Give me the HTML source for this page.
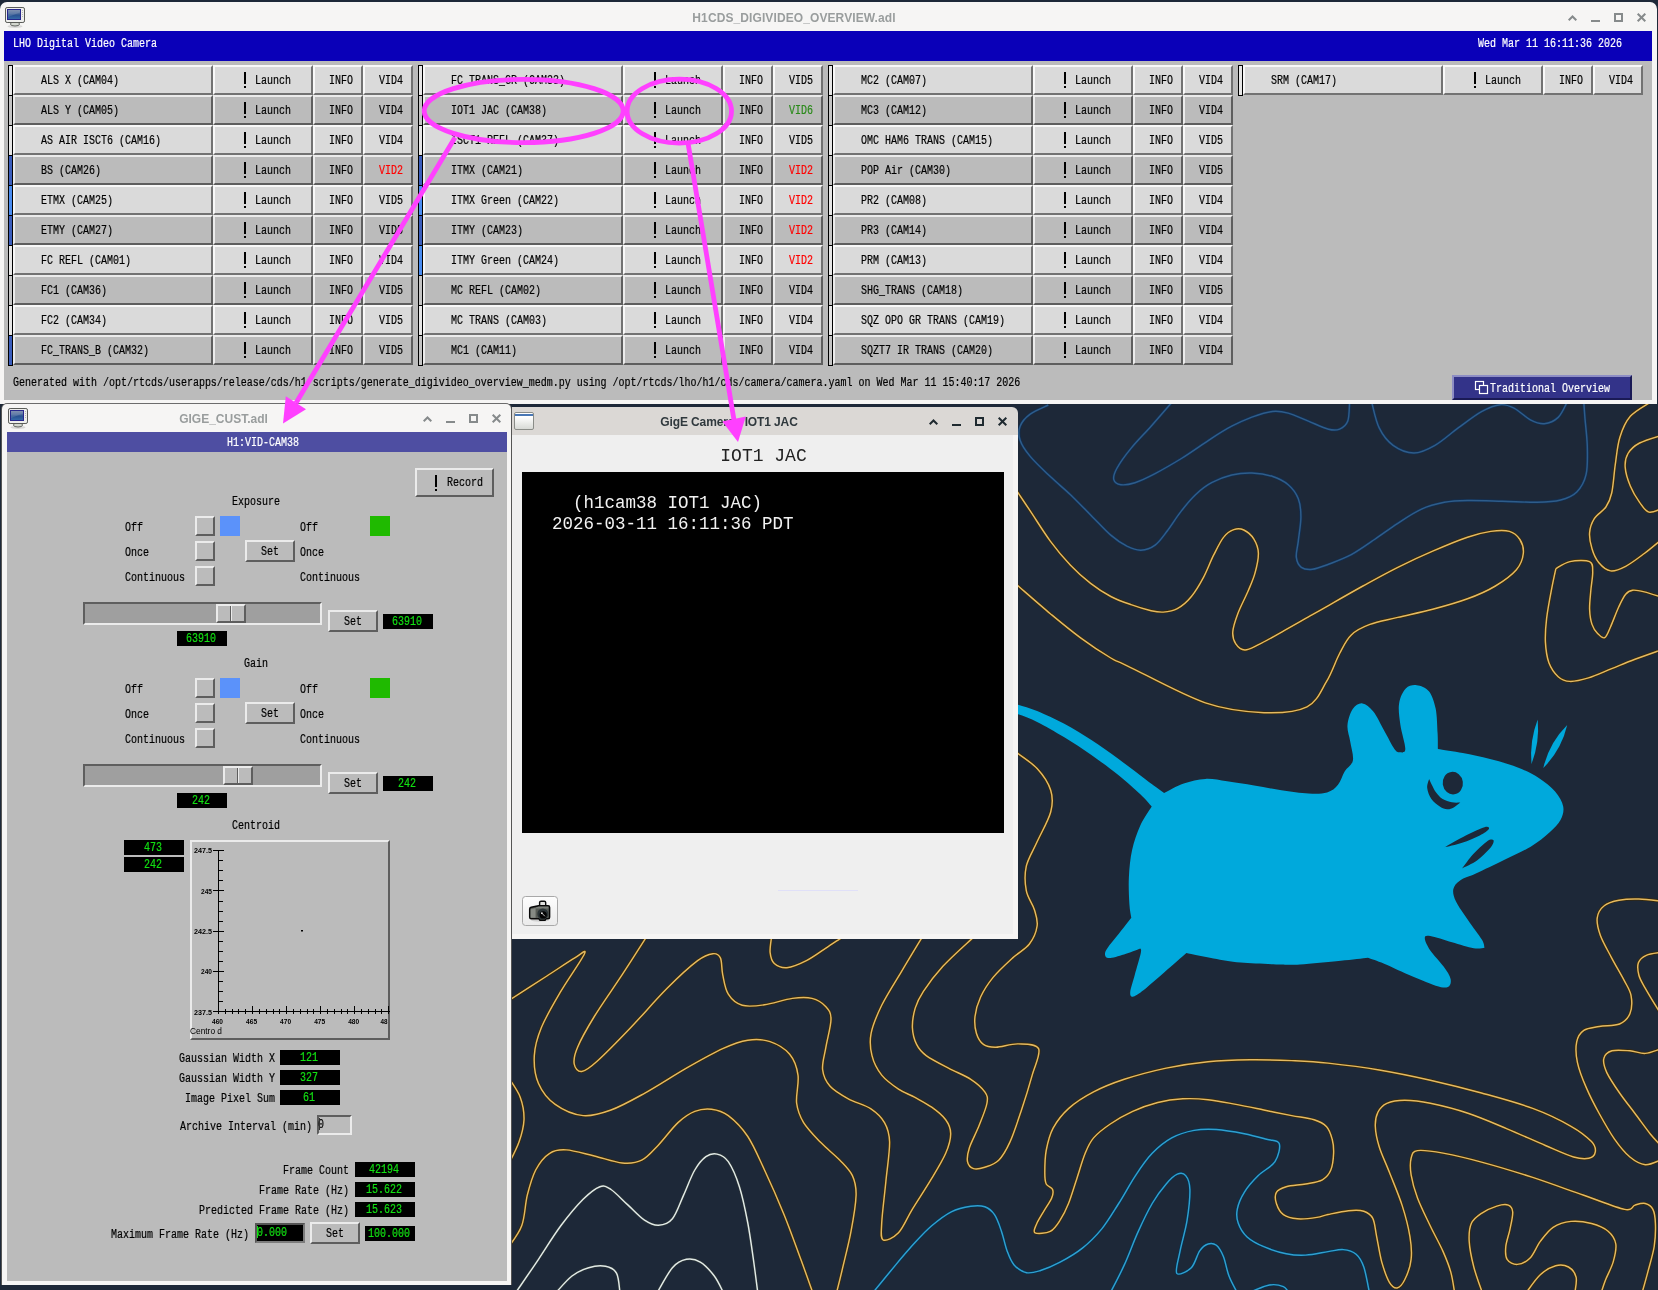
<!DOCTYPE html>
<html><head><meta charset="utf-8"><title>desktop</title><style>
html,body{margin:0;padding:0}
body{width:1658px;height:1290px;position:relative;overflow:hidden;background:#1d2838;font-family:"Liberation Sans",sans-serif}
.abs,.b,.m,.wt{position:absolute}
.m{font:13.7px/14px "Liberation Mono",monospace;white-space:pre;transform:scaleX(0.73);transform-origin:0 0;color:#000;-webkit-text-stroke:.22px currentColor}
.b{box-sizing:border-box;border:2px solid}
.bl{background:#dadada;border-color:#f8f8f8 #727272 #727272 #f8f8f8}
.bd{background:#bbb;border-color:#ebebeb #5e5e5e #5e5e5e #ebebeb}
.wt{text-align:center;font:bold 12px "Liberation Sans",sans-serif;white-space:nowrap}
#lay{position:absolute;left:0;top:0;width:1658px;height:1290px;will-change:transform}
#w1{position:absolute;left:0;top:2px;width:1657px;height:402px;background:#f6f5f4;border-radius:7px 7px 0 0}
#w2{position:absolute;left:2px;top:404px;width:509px;height:881px;background:#f6f5f4;border-radius:5px 5px 0 0;box-shadow:0 -1px 0 #6c6c6c,1px 0 0 #555,-1px 0 0 #555}
#w3{position:absolute;left:512px;top:407px;width:506px;height:532px;background:#dbd8d5;border-radius:0 6px 0 0}
.vt{font:17.5px/19.1px "Liberation Mono",monospace;white-space:pre;color:#f2f2f2;transform:scaleY(1.1);transform-origin:0 0}
</style></head>
<body>
<svg style="position:absolute;left:0;top:0" width="1658" height="1290" viewBox="0 0 1658 1290">
<defs><path id="ln0" d="M1048.3 405C1045.3 406.6 1034.9 410.6 1030.2 414.1C1025.5 417.6 1021.8 421.8 1020.1 426.2C1018.4 430.6 1018.4 435.3 1020.1 440.3C1021.8 445.4 1025.1 450.4 1030.2 456.4C1035.2 462.5 1043.6 470.2 1050.3 476.6C1057 483 1063.8 488.4 1070.5 494.7C1077.2 501.1 1083.9 508.2 1090.6 514.9C1097.4 521.6 1104.7 529.9 1110.8 535.1C1116.8 540.3 1121.9 543.6 1126.9 546.2C1132 548.7 1136.3 550.4 1141 550.2C1145.7 550 1150.8 548.3 1155.1 545.1C1159.5 542 1162.9 536.7 1167.2 531C1171.6 525.3 1176.6 516.9 1181.4 510.9C1186.1 504.8 1190.4 499.5 1195.5 494.7C1200.5 490 1205.5 485.9 1211.6 482.7C1217.6 479.4 1225 476.6 1231.7 475C1238.5 473.4 1245.2 472.8 1251.9 473C1258.6 473.2 1266 474.3 1272.1 476.2C1278.1 478.1 1283.8 480.9 1288.2 484.7C1292.6 488.4 1296.2 493.4 1298.3 498.8C1300.4 504.2 1300.9 509.9 1300.9 516.9C1300.9 524 1299 534.4 1298.3 541.1C1297.5 547.8 1295.8 552.9 1296.3 557.2C1296.8 561.6 1298.6 565.3 1301.3 567.3C1304 569.3 1307.8 569.8 1312.4 569.3C1316.9 568.8 1322 566.7 1328.5 564.3C1335 561.8 1343.6 558.8 1351.3 554.7C1358.9 550.5 1366.8 544.8 1374.5 539.5C1382.3 534.3 1390 528.3 1397.8 523.3C1405.5 518.2 1413.3 512.8 1421 509.3C1428.8 505.8 1436.5 503.8 1444.3 502.3C1452 500.9 1457.8 500.7 1467.5 500.5C1477.2 500.3 1490.8 500.9 1502.4 501.2C1514 501.5 1527.6 502.5 1537.3 502.3C1547 502.1 1554 501.7 1560.6 500C1567.1 498.3 1572.6 496.1 1576.8 491.9C1581.1 487.6 1584.4 482 1586.1 474.4C1587.9 466.9 1587.5 455.8 1587.3 446.5C1587.1 437.2 1585.6 426 1585 418.6C1584.4 411.2 1584 405 1583.8 402.3M1171.3 403C1167.9 406.9 1157.8 418.6 1151.1 426.2C1144.4 433.8 1136.7 441.3 1131 448.4C1125.2 455.4 1119.7 463.3 1116.8 468.5C1114 473.7 1113.1 476.9 1113.8 479.6C1114.5 482.3 1117.3 484.2 1120.9 484.7C1124.4 485.2 1129.3 484.5 1135 482.7C1140.7 480.8 1147.4 477.6 1155.1 473.6C1162.9 469.5 1171.9 464.3 1181.4 458.5C1190.8 452.6 1203.2 443.7 1211.6 438.3C1220 432.9 1225 429.7 1231.7 426.2C1238.5 422.7 1245.2 419.6 1251.9 417.1C1258.6 414.7 1266 412.2 1272.1 411.5C1278.1 410.8 1282.1 411.5 1288.2 413.1C1294.2 414.7 1301.6 418.5 1308.4 421.2C1315.1 423.9 1323.3 427.9 1328.5 429.2C1333.7 430.5 1336.4 430.5 1339.6 429.1C1342.8 427.7 1346.1 425.4 1347.8 420.9C1349.4 416.5 1349.3 405.4 1349.6 402.3M1371.7 402.3C1373 406.6 1375.6 420.7 1379.2 427.9C1382.7 435.1 1387.3 441.2 1393.1 445.3C1398.9 449.5 1407.1 453 1414 453C1421 453 1427.6 449.5 1435 445.3C1442.3 441.2 1450.5 433.5 1458.2 427.9C1466 422.3 1474.5 415.5 1481.5 411.6C1488.5 407.8 1494.7 405.2 1500.1 404.7C1505.5 404.1 1509 405.6 1514 408.1C1519.1 410.7 1525.3 417.2 1530.3 419.8C1535.4 422.4 1539.6 424.1 1544.3 423.7C1548.9 423.3 1554.4 421 1558.2 417.4C1562 413.9 1565.6 404.8 1567.1 402.3"/></defs>
<use href="#ln0" fill="none" stroke="#122f52" stroke-width="2.9"/>
<use href="#ln0" fill="none" stroke="#2e5d8b" stroke-width="1.45"/>
<defs><path id="ln1" d="M1014 486.7C1016.7 490.7 1024.1 501.8 1030.2 510.9C1036.2 519.9 1043.6 532 1050.3 541.1C1057 550.2 1063.8 558.2 1070.5 565.3C1077.2 572.4 1083.9 578.2 1090.6 583.4C1097.4 588.7 1104.1 593 1110.8 596.5C1117.5 600.1 1124.2 602.3 1131 604.6C1137.7 607 1145.7 609.4 1151.1 610.7C1156.5 611.9 1158.8 612.4 1163.2 612.1C1167.6 611.7 1172.6 611.2 1177.3 608.6C1182 606.1 1187.1 601.8 1191.4 596.5C1195.8 591.3 1199.8 584.3 1203.5 577.4C1207.2 570.5 1210.2 561.9 1213.6 555.2C1217 548.5 1220.3 541.3 1223.7 537.1C1227 532.8 1230.4 530.8 1233.8 529.6C1237.1 528.4 1240.5 528.4 1243.8 530C1247.2 531.6 1251.5 535.2 1253.9 539.1C1256.3 543 1258.2 547.5 1258.4 553.2C1258.5 558.9 1256.7 567 1254.9 573.4C1253.2 579.7 1250.7 584.8 1247.9 591.5C1245 598.2 1240.3 607 1237.8 613.7C1235.3 620.4 1233.1 626.8 1232.8 631.8C1232.4 636.9 1233.8 640.9 1235.8 643.9C1237.8 646.9 1241.2 649.8 1244.9 650C1248.5 650.1 1251.7 648 1258 644.9C1264.2 641.9 1273.1 636.9 1282.1 631.8C1291.2 626.8 1304.7 619 1312.4 614.7C1320 610.4 1319.6 610.6 1328 605.8C1336.4 601 1351.3 592.4 1362.9 586C1374.5 579.7 1386.1 573.3 1397.8 567.4C1409.4 561.6 1421 556.2 1432.7 551.2C1444.3 546.1 1457.8 540.5 1467.5 537.2C1477.2 533.9 1483.8 532.4 1490.8 531.4C1497.8 530.4 1504.6 530 1509.4 531.4C1514.2 532.8 1517.5 535.9 1519.9 539.5C1522.2 543.2 1523.9 548.4 1523.3 553.5C1522.8 558.5 1521 564.3 1516.4 569.8C1511.7 575.2 1503.6 581.2 1495.4 586C1487.3 590.9 1478 595 1467.5 598.8C1457.1 602.7 1444.3 606.2 1432.7 609.3C1421 612.4 1408.2 614.9 1397.8 617.4C1387.3 620 1377.6 621.5 1369.9 624.4C1362.1 627.3 1356.3 630 1351.3 634.9C1346.2 639.7 1343.7 645.7 1339.6 653.5C1335.5 661.2 1332 672.5 1326.6 681.4C1321.1 690.3 1317.5 701.6 1307 706.8C1296.6 712 1281 713.3 1264 712.7C1247.1 712 1228.2 710.7 1205.4 702.9C1182.6 695.1 1143 673.2 1127.2 665.8C1111.5 658.3 1118.6 662.7 1110.8 658C1103 653.4 1090.6 645.3 1080.6 637.9C1070.5 630.5 1061.4 622.9 1050.3 613.7C1039.2 604.4 1020.1 587.6 1014 582.4M1650.1 402.3C1646.8 404.7 1635.4 410.5 1630.3 416.3C1625.3 422.1 1622.4 429.1 1619.9 437.2C1617.3 445.3 1616.6 455.8 1615.2 465.1C1613.9 474.4 1613.3 486 1611.7 493C1610.2 500 1608.8 502.7 1605.9 507C1603 511.2 1597 514.3 1594.3 518.6C1591.6 522.9 1590 527.5 1589.6 532.6C1589.2 537.6 1590.4 543.8 1592 548.8C1593.5 553.9 1595.8 559.1 1598.9 562.8C1602 566.5 1606.1 570.3 1610.6 570.9C1615 571.5 1620.1 569.2 1625.7 566.3C1631.3 563.4 1638.1 558.1 1644.3 553.5C1650.5 548.8 1659.8 540.9 1662.9 538.4M1662.9 434.9C1659 436.2 1645.4 439.9 1639.6 443C1633.8 446.1 1630.4 449.4 1628 453.5C1625.6 457.6 1624.8 462 1625.2 467.4C1625.6 472.9 1627.9 480.2 1630.3 486C1632.7 491.9 1636.5 498 1639.6 502.3C1642.7 506.7 1645.1 511.1 1648.9 512.1C1652.8 513.1 1660.6 508.8 1662.9 508.1M1662.9 597.7C1659.8 596.7 1649.3 593.1 1644.3 591.9C1639.2 590.6 1635.8 589.8 1632.7 590.2C1629.6 590.6 1628 591.4 1625.7 594.2C1623.3 597 1621.2 601.6 1618.7 607C1616.2 612.4 1612.9 621.6 1610.6 626.7C1608.2 631.9 1606.9 636.5 1604.7 637.7C1602.6 638.8 1599.9 635.9 1597.8 633.7C1595.6 631.5 1593.3 628.5 1592 624.4C1590.6 620.3 1589.8 614.9 1589.6 609.3C1589.4 603.7 1590.3 596.9 1590.8 590.7C1591.3 584.5 1592.8 576.9 1592.7 572.1C1592.5 567.2 1593.4 563.4 1589.6 561.6C1585.8 559.9 1575.5 560.5 1569.9 561.6C1564.2 562.8 1558.2 567.4 1555.9 568.6M1555.9 568.6C1555.1 572.3 1552.8 582.4 1551.3 590.7C1549.7 599 1547.6 610.1 1546.6 618.6C1545.6 627.1 1545.1 634.5 1545.4 641.9C1545.8 649.2 1546.8 657 1548.9 662.8C1551.1 668.6 1554.7 673.6 1558.2 676.7C1561.7 679.8 1564.8 681.2 1569.9 681.4C1574.9 681.6 1581.5 680 1588.5 677.9C1595.4 675.8 1604 671.7 1611.7 668.6C1619.5 665.5 1626.4 662.5 1635 659.3C1643.5 656.1 1658.2 651 1662.9 649.3M1661.2 901.2C1657.5 900.8 1645.9 899.1 1638.9 899C1631.9 898.8 1624.8 899.1 1619 900.2C1613.2 901.3 1607.8 902.7 1604.2 905.7C1600.5 908.6 1597.8 913.1 1597.2 918.1C1596.6 923 1598 928.8 1600.4 935.5C1602.8 942.1 1607.7 950.3 1611.6 957.8C1615.5 965.2 1620.7 973.8 1624 980.1C1627.3 986.5 1630.2 990.2 1631.1 995.8C1632.1 1001.4 1631.8 1009 1629.9 1013.7C1627.9 1018.4 1624.7 1021.8 1619.6 1024C1614.5 1026.1 1605.1 1025.4 1599.2 1026.5C1593.2 1027.6 1587.6 1027.8 1583.8 1030.3C1580.1 1032.9 1577.7 1036.5 1576.7 1041.9C1575.6 1047.2 1575.8 1054.7 1577.4 1062.3C1579 1070 1582.7 1079.4 1586.4 1087.9C1590 1096.4 1594.5 1105 1599.2 1113.5C1603.9 1122 1609.4 1131.8 1614.5 1139.1C1619.6 1146.3 1624.7 1152.7 1629.9 1157C1635 1161.2 1640.1 1164.1 1645.2 1164.7C1650.3 1165.2 1658 1160.8 1660.6 1160M1661.2 952.3C1658.7 952.8 1650.1 953.6 1646.3 955.3C1642.5 957 1639.6 959.4 1638.4 962.7C1637.2 966.1 1637.8 970.9 1638.9 975.2C1640 979.4 1641.6 981.7 1645.2 988.1C1648.8 994.6 1658 1009.5 1660.6 1013.7M1660.6 1049C1658 1049.7 1650.3 1053.1 1645.2 1053.4C1640.1 1053.7 1635.4 1051.2 1629.9 1050.8C1624.3 1050.4 1616.3 1049.5 1612 1050.8C1607.6 1052.1 1604.6 1054.9 1603.8 1058.5C1602.9 1062.1 1604.2 1066.8 1606.8 1072.6C1609.5 1078.3 1614.9 1086.2 1619.6 1093C1624.3 1099.8 1629.9 1106.7 1635 1113.5C1640.1 1120.3 1646.1 1128.6 1650.3 1134C1654.6 1139.3 1658.9 1143.5 1660.6 1145.5M1328 1214.5C1333.3 1213.4 1342.5 1211.3 1348.5 1210.7C1354.4 1210.1 1359.8 1209.9 1363.8 1211.2C1367.9 1212.5 1370.6 1214.2 1372.8 1218.4C1374.9 1222.6 1375.1 1229 1376.6 1236.3C1378.1 1243.5 1379.6 1254.2 1381.7 1261.9C1383.9 1269.5 1386.8 1278 1389.4 1282.3C1392 1286.7 1394.5 1288.4 1397.1 1288C1399.6 1287.5 1402.4 1284.5 1404.7 1279.8C1407.1 1275 1410.3 1266.6 1411.1 1259.3C1412 1252.1 1411.4 1245.2 1409.9 1236.3C1408.4 1227.3 1405.6 1216.2 1402.2 1205.6C1398.8 1194.9 1393.2 1182.1 1389.4 1172.3C1385.6 1162.5 1381.5 1154.4 1379.2 1146.7C1376.8 1139.1 1375.5 1132 1375.3 1126.3C1375.1 1120.5 1376 1116 1377.9 1112.2C1379.8 1108.4 1382.4 1105.3 1386.8 1103.3C1391.3 1101.3 1397.5 1100.2 1404.7 1100.2C1412 1100.2 1419.7 1101 1430.3 1103.3C1441 1105.5 1455.9 1109.2 1468.7 1113.5C1481.5 1117.8 1494.3 1123.5 1507.1 1128.8C1519.9 1134.2 1534.4 1140.8 1545.4 1145.5C1556.5 1150.2 1566.3 1154.8 1573.6 1157C1580.8 1159.1 1585.3 1159.1 1588.9 1158.3C1592.6 1157.4 1594.9 1154.6 1595.3 1151.9C1595.8 1149.1 1595.5 1145.9 1591.5 1141.6C1587.4 1137.4 1580.8 1131.8 1571 1126.3C1561.2 1120.7 1547.6 1113.9 1532.7 1108.4C1517.7 1102.8 1498.5 1097.7 1481.5 1093C1464.4 1088.3 1447.4 1084.1 1430.3 1080.2C1413.3 1076.4 1396.2 1072.9 1379.2 1070C1362.1 1067.1 1342.6 1064.7 1328 1063.1C1313.4 1061.5 1304.8 1061.2 1291.7 1060.6C1278.7 1060.1 1263.8 1059.6 1249.9 1059.8C1235.9 1060 1222 1060.3 1208 1061.7C1194.1 1063.1 1180.1 1065.2 1166.2 1068.1C1152.2 1071.1 1136.4 1075.3 1124.3 1079.3C1112.2 1083.3 1102.9 1087 1093.6 1091.9C1084.3 1096.7 1075.2 1102.6 1068.5 1108.6C1061.7 1114.7 1056.9 1121.2 1053.1 1128.1C1049.4 1135.1 1047.6 1143 1046.2 1150.5C1044.8 1157.9 1044.8 1167.2 1044.8 1172.8C1044.8 1178.4 1044.9 1181.2 1046.2 1184C1047.5 1186.7 1051.7 1187.2 1052.6 1189.5C1053.5 1191.9 1053.3 1194.2 1051.7 1197.9C1050.2 1201.6 1045.9 1207.4 1043.4 1211.9C1040.8 1216.3 1037.8 1220.9 1036.4 1224.4C1035 1227.9 1032.7 1231.6 1035 1232.8C1037.3 1234 1046.2 1233.5 1050.3 1231.4C1054.5 1229.3 1057.1 1224.9 1060.1 1220.2C1063.1 1215.6 1065.7 1210.5 1068.5 1203.5C1071.3 1196.5 1074.1 1186.7 1076.9 1178.4C1079.7 1170 1082.4 1160 1085.2 1153.3C1088 1146.5 1089.4 1142.8 1093.6 1137.9C1097.8 1133 1103.8 1128.4 1110.3 1124C1116.9 1119.5 1124.8 1115 1132.7 1111.4C1140.6 1107.8 1149.4 1104.6 1157.8 1102.5C1166.2 1100.4 1174.5 1099.3 1182.9 1098.8C1191.3 1098.4 1199.2 1098.7 1208 1099.7C1216.9 1100.6 1226.6 1102.7 1235.9 1104.4C1245.2 1106.1 1254.5 1108.1 1263.8 1110C1273.1 1111.9 1283.4 1114 1291.7 1115.6C1300.1 1117.2 1308.3 1117.9 1314.1 1119.8C1319.9 1121.6 1323.6 1123.5 1326.6 1126.7C1329.7 1130 1331 1134.9 1332.2 1139.3C1333.4 1143.7 1333.8 1148.1 1333.6 1153.3C1333.4 1158.4 1332.7 1165.6 1330.8 1170C1329 1174.4 1326.6 1177.4 1322.4 1179.8C1318.3 1182.1 1311.7 1182.8 1305.7 1184C1299.7 1185.1 1291 1185.3 1286.2 1186.7C1281.3 1188.1 1278 1189.5 1276.4 1192.3C1274.8 1195.1 1275.2 1199.8 1276.4 1203.5C1277.6 1207.2 1279.9 1212.1 1283.4 1214.7C1286.9 1217.2 1291.7 1218.4 1297.3 1218.8C1302.9 1219.3 1311.7 1218.2 1316.9 1217.4C1322 1216.7 1322.7 1215.7 1328 1214.5ZM1454.6 1292.6C1454 1289.1 1452.7 1278.9 1450.8 1272.1C1448.9 1265.3 1446.5 1259.3 1443.1 1251.6C1439.7 1244 1434.6 1235 1430.3 1226C1426.1 1217.1 1420.7 1206.4 1417.5 1197.9C1414.3 1189.4 1412.2 1181.5 1411.1 1174.9C1410.1 1168.3 1410.1 1162.3 1411.1 1158.3C1412.2 1154.2 1412.2 1151.4 1417.5 1150.6C1422.9 1149.7 1432.5 1151.2 1443.1 1153.1C1453.8 1155.1 1466.6 1158 1481.5 1162.1C1496.4 1166.1 1515.6 1171.9 1532.7 1177.4C1549.7 1183 1568.5 1190 1583.8 1195.3C1599.2 1200.7 1616.2 1207.8 1624.7 1209.4C1633.3 1211 1631.6 1206.1 1635 1205.1C1638.4 1204.1 1642.2 1202.8 1645.2 1203.5C1648.2 1204.3 1651.2 1206.1 1652.9 1209.4C1654.6 1212.7 1655.2 1217.3 1655.4 1223.5C1655.7 1229.7 1655.4 1238.4 1654.2 1246.5C1652.9 1254.6 1649.8 1264.4 1647.8 1272.1C1645.8 1279.8 1643.1 1289.1 1642.1 1292.6M1526.3 1292.6C1528.6 1289.6 1535.4 1279.1 1540.3 1274.7C1545.2 1270.2 1551 1267 1555.7 1265.7C1560.4 1264.4 1565.1 1265.1 1568.5 1267C1571.9 1268.9 1575.1 1272.9 1576.1 1277.2C1577.2 1281.5 1575.1 1290 1574.9 1292.6M1482.3 1292.6C1480.8 1288.3 1476 1275.5 1473.8 1267C1471.6 1258.4 1469.6 1248.6 1469.2 1241.4C1468.8 1234.1 1469.2 1228.2 1471.3 1223.5C1473.3 1218.8 1477.2 1216.2 1481.5 1213.3C1485.8 1210.4 1492.4 1207.5 1496.8 1206.1C1501.3 1204.7 1505.7 1204.1 1508.3 1205.1C1511 1206.1 1512.4 1208.1 1512.7 1212C1513 1215.9 1511.3 1222.8 1510.1 1228.6C1509 1234.4 1506.3 1241.4 1505.8 1246.5C1505.3 1251.6 1505.2 1256.3 1507.1 1259.3C1509 1262.3 1513.5 1264.6 1517.3 1264.4C1521.1 1264.2 1526.3 1261.9 1530.1 1258C1533.9 1254.2 1536.5 1246.5 1540.3 1241.4C1544.2 1236.3 1548 1230.7 1553.1 1227.3C1558.2 1224 1564.6 1222.1 1571 1221.4C1577.4 1220.8 1585.3 1221.9 1591.5 1223.5C1597.7 1225.1 1604.1 1227.8 1608.1 1231.2C1612.2 1234.6 1614.9 1238.8 1615.8 1244C1616.6 1249.1 1614.9 1255.9 1613.2 1261.9C1611.5 1267.8 1607.6 1274.7 1605.6 1279.8C1603.6 1284.9 1601.9 1290.4 1601.2 1292.6M507.8 1001.2C514.3 997 535.7 983.3 546.9 976C558 968.8 568.5 961.6 574.8 957.9C581 954.2 586.9 948.1 584.5 953.7C582.2 959.3 568 979.1 560.8 991.4C553.6 1003.7 545.7 1017 541.3 1027.7C536.9 1038.4 534.8 1046.3 534.3 1055.6C533.8 1064.9 535 1075.3 538.5 1083.5C542 1091.6 547.8 1099.1 555.2 1104.4C562.7 1109.8 573.8 1114.7 583.1 1115.6C592.4 1116.5 600.8 1113.7 611 1110C621.3 1106.3 632 1100.2 644.5 1093.3C657.1 1086.3 673.4 1075.6 686.4 1068.1C699.4 1060.7 712.4 1053.3 722.7 1048.6C732.9 1044 739.9 1041.4 747.8 1040.2C755.7 1039.1 763.1 1039.3 770.1 1041.6C777.1 1044 785 1048.6 789.7 1054.2C794.3 1059.8 796.9 1067 798 1075.1C799.2 1083.3 795.7 1095.1 796.6 1103C797.6 1110.9 799.7 1116 803.6 1122.6C807.6 1129.1 814.3 1135.8 820.3 1142.1C826.4 1148.4 834.5 1154.7 839.9 1160.2C845.2 1165.8 849.7 1169.8 852.4 1175.6C855.1 1181.4 856.3 1185.8 856.1 1195.1C855.8 1204.4 853.3 1219.3 851 1231.4C848.8 1243.5 845.1 1257.4 842.7 1267.7C840.3 1277.9 837.6 1288.6 836.5 1292.8M647.3 935.6C643.1 942.1 631 961.2 622.2 974.7C613.4 988.1 601.7 1004.4 594.3 1016.5C586.9 1028.6 580.9 1039.3 577.6 1047.2C574.2 1055.1 573.5 1059.9 574.2 1064C574.9 1068 577.9 1072 581.7 1071.5C585.6 1071 589 1068.5 597.1 1061.2C605.2 1053.9 619 1039.8 630.6 1027.7C642.2 1015.6 655.7 999.8 666.9 988.6C678 977.4 689.9 966.5 697.6 960.7C705.2 954.9 709.1 954.2 712.9 953.7C716.7 953.3 718.8 954.4 720.4 957.9C722.1 961.4 721.4 968.6 722.7 974.7C724 980.7 725 989.1 728.3 994.2C731.5 999.3 736.2 1003.6 742.2 1005.3C748.3 1007.1 756.2 1006 764.5 1004.8C772.9 1003.6 784.5 999.4 792.4 998.4C800.3 997.3 806.4 997 812 998.4C817.6 999.8 822.8 1003.3 825.9 1006.7C829.1 1010.2 831 1012.6 831 1019.3C831 1026 827.3 1038.8 825.9 1047.2C824.5 1055.6 821.9 1063 822.6 1069.5C823.3 1076 825.8 1081.4 830.1 1086.3C834.4 1091.2 841.5 1095.1 848.3 1098.8C855 1102.6 864.5 1104.7 870.6 1108.6C876.6 1112.6 881.4 1117 884.5 1122.6C887.7 1128.1 889.3 1132.3 889.6 1142.1C889.8 1151.9 887.2 1167.7 885.9 1181.2C884.6 1194.7 882.2 1213.3 881.7 1223C881.3 1232.8 880.3 1238.1 883.1 1239.8C885.9 1241.4 893.6 1237.9 898.5 1232.8C903.4 1227.7 906.9 1218.1 912.4 1209.1C918 1200 926.2 1187.7 931.7 1178.4C937.3 1169.1 942.5 1160.7 945.7 1153.3C948.9 1145.8 950.7 1139.3 950.7 1133.7C950.7 1128.1 948.9 1124.2 945.7 1119.8C942.5 1115.3 936.9 1110.9 931.7 1107.2C926.6 1103.5 920.5 1100.5 915 1097.4C909.5 1094.4 904 1092.8 898.5 1089.1C892.9 1085.3 886.2 1080.7 881.7 1075.1C877.3 1069.5 873.7 1062.6 872 1055.6C870.2 1048.6 869.5 1041.6 871.1 1033.3C872.8 1024.9 876.7 1015.6 881.7 1005.3C886.8 995.1 894.4 983.4 901.3 971.9C908.1 960.3 919.2 942.1 922.8 936.1M771.5 937C771.3 939.5 769.7 947.9 770.1 952.3C770.6 956.7 771.5 960.9 774.3 963.5C777.1 966 781.5 968.1 786.9 967.7C792.2 967.2 799.9 964 806.4 960.7C812.9 957.4 820.1 952 825.9 948.1C831.7 944.3 838.7 939.5 841.3 937.8M972.2 938.4C967.3 943 951 957.4 942.9 966.3C934.8 975.1 928 984.4 923.4 991.4C918.8 998.4 917.1 1002.1 915.2 1008.1C913.4 1014.2 912.2 1021.6 912.4 1027.7C912.7 1033.7 914.3 1039.8 916.6 1044.4C918.9 1049.1 920.9 1051.6 926.2 1055.6C931.5 1059.5 941 1064.2 948.5 1068.1C955.9 1072.1 964.8 1075.3 970.8 1079.3C976.9 1083.3 982.1 1087.9 984.8 1091.9C987.5 1095.8 987.9 1097.4 987 1103C986.1 1108.6 982.1 1117.9 979.2 1125.3C976.3 1132.8 971.4 1141.6 969.4 1147.7C967.5 1153.7 966.8 1158.1 967.5 1161.6C968.2 1165.1 970.7 1167.7 973.6 1168.6C976.5 1169.5 980.6 1168.6 984.8 1167.2C989 1165.8 994.5 1164.4 998.7 1160.2C1002.9 1156 1006.2 1150.2 1009.9 1142.1C1013.6 1134 1017.3 1122.6 1021 1111.4C1024.8 1100.2 1029.3 1085.6 1032.2 1075.1C1035.1 1064.7 1041 1053.8 1038.6 1048.6C1036.3 1043.4 1025.4 1044.1 1018.3 1043.9C1011.1 1043.6 1001.7 1047.1 995.9 1047.2C990.1 1047.3 986.6 1046.7 983.4 1044.4C980.1 1042.1 977.8 1037.9 976.4 1033.3C975 1028.6 974.3 1022.6 975 1016.5C975.7 1010.5 977.6 1003.5 980.6 997C983.6 990.5 987.8 984 993.1 977.4C998.5 970.9 1006.6 963.5 1012.7 957.9C1018.7 952.3 1025.3 949.3 1029.4 944C1033.5 938.6 1036.3 931.7 1037.1 926C1038 920.2 1036.2 915.6 1034.4 909.7C1032.6 903.8 1027.6 897.9 1026.3 890.7C1024.9 883.4 1024.5 874.4 1026.3 866.2C1028.1 858.1 1033.1 850.9 1037.1 841.8C1041.2 832.8 1048.4 820.6 1050.7 812C1053 803.4 1053 797.5 1050.7 790.3C1048.4 783 1043 775 1037.1 768.6C1031.3 762.1 1019 754.5 1015.4 751.7M507.8 1248.1C510.1 1244.4 518.5 1234.7 521.7 1225.8C525 1217 525 1204.4 527.3 1195.1C529.7 1185.8 532 1177 535.7 1170C539.4 1163 544.5 1156.6 549.7 1153.3C554.8 1149.9 559 1149.4 566.4 1149.9C573.8 1150.4 585 1153.9 594.3 1156C603.6 1158.2 614.3 1162.3 622.2 1163C630.1 1163.7 635.7 1163.3 641.7 1160.2C647.8 1157.2 652.4 1151.2 658.5 1144.9C664.5 1138.6 672 1128.1 678 1122.6C684.1 1117 689.2 1113.6 694.8 1111.4C700.3 1109.2 705.9 1108.5 711.5 1109.2C717.1 1109.9 722.2 1111 728.3 1115.6C734.3 1120.1 741.7 1127.4 747.8 1136.5C753.8 1145.6 758.5 1157 764.5 1170C770.6 1183 778 1199.8 784.1 1214.7C790.1 1229.5 796 1246.3 800.8 1259.3C805.6 1272.3 810.8 1287.2 812.8 1292.8M507.8 1076.5C509.9 1080 517.7 1090.2 520.3 1097.4C523 1104.7 524.2 1112.3 524 1119.8C523.7 1127.2 521.7 1134.4 519 1142.1C516.3 1149.8 509.7 1161.9 507.8 1165.8"/></defs>
<use href="#ln1" fill="none" stroke="#3a2906" stroke-width="2.9"/>
<use href="#ln1" fill="none" stroke="#e4ba62" stroke-width="1.45"/>
<defs><path id="ln2" d="M515.6 1292.8C519.4 1287.2 531 1270.5 538.5 1259.3C546 1248.1 553.4 1235.8 560.8 1225.8C568.3 1215.8 576.6 1205.8 583.1 1199.3C589.7 1192.8 595.2 1188.4 599.9 1186.7C604.5 1185.1 606.4 1186.5 611 1189.5C615.7 1192.6 622.2 1199.8 627.8 1204.9C633.4 1210 639.4 1216.8 644.5 1220.2C649.7 1223.6 653.8 1225.5 658.5 1225.3C663.1 1225 668.3 1223.9 672.4 1218.8C676.6 1213.8 679.9 1203.3 683.6 1195.1C687.3 1187 691 1176.4 694.8 1170C698.5 1163.6 702.2 1159.3 705.9 1156.6C709.7 1154 713.4 1153.3 717.1 1154.1C720.8 1154.9 724.5 1156.2 728.3 1161.6C732 1167.1 736.2 1176.5 739.4 1186.7C742.7 1197 745.5 1210.9 747.8 1223C750.1 1235.1 751.7 1247.7 753.4 1259.3C755 1270.9 757.1 1287.2 757.8 1292.8M555.8 1292.8C558.5 1290 566.5 1280.2 572 1276C577.5 1271.9 583.1 1269.3 588.7 1267.7C594.3 1266 600.8 1265.3 605.5 1266.3C610.1 1267.2 614.2 1268.8 616.6 1273.3C619 1277.7 619.4 1289.5 620 1292.8M657.1 1292.8C659.7 1288.6 667.6 1273.3 672.4 1267.7C677.3 1262.1 681.7 1260.2 686.4 1259.3C691 1258.4 695.7 1259.3 700.3 1262.1C705 1264.9 710.4 1270.9 714.3 1276C718.2 1281.2 722 1290 723.5 1292.8"/></defs>
<use href="#ln2" fill="none" stroke="#2a3338" stroke-width="2.9"/>
<use href="#ln2" fill="none" stroke="#e2ebe7" stroke-width="1.45"/>
<defs><path id="ln3" d="M872.8 1292.8C876.6 1288.1 888.7 1273.3 895.7 1264.9C902.7 1256.5 909 1249.1 915 1242.6C921 1236 925.7 1230.9 931.7 1225.8C937.8 1220.7 944.8 1215.1 951.3 1211.9C957.8 1208.6 965.2 1207.1 970.8 1206.3C976.4 1205.4 980.8 1205.4 984.8 1206.8C988.7 1208.2 991.7 1210.6 994.5 1214.7C997.3 1218.7 999.4 1225.3 1001.5 1231.4C1003.6 1237.4 1005 1245.3 1007.1 1250.9C1009.2 1256.5 1010.8 1261.3 1014.1 1264.9C1017.3 1268.5 1022.2 1271.8 1026.6 1272.7C1031 1273.6 1035 1272.2 1040.6 1270.5C1046.2 1268.7 1053.1 1265.8 1060.1 1262.1C1067.1 1258.4 1075.5 1253.7 1082.4 1248.1C1089.4 1242.6 1095.9 1236 1102 1228.6C1108 1221.2 1113.1 1212.3 1118.7 1203.5C1124.3 1194.7 1129.9 1184 1135.5 1175.6C1141 1167.2 1146.2 1159.5 1152.2 1153.3C1158.3 1147 1164.8 1141.7 1171.7 1137.9C1178.7 1134.1 1186.6 1131.8 1194.1 1130.4C1201.5 1129 1208 1129 1216.4 1129.5C1224.8 1130.1 1235.9 1132.1 1244.3 1133.7C1252.7 1135.3 1260.8 1137.7 1266.6 1139.3C1272.4 1140.9 1277.8 1139.8 1279.2 1143.5C1280.6 1147.2 1278.5 1156.3 1275 1161.6C1271.5 1167 1263.4 1170.5 1258.3 1175.6C1253.1 1180.7 1247.8 1186.7 1244.3 1192.3C1240.8 1197.9 1238.3 1204 1237.3 1209.1C1236.3 1214.2 1236.5 1218.4 1238.2 1223C1239.8 1227.7 1242.8 1233 1247.1 1237C1251.4 1240.9 1257.3 1244 1263.8 1246.7C1270.3 1249.5 1279.2 1252.3 1286.2 1253.7C1293.1 1255.1 1298.7 1255.5 1305.7 1255.1C1312.7 1254.8 1321.7 1252.6 1328 1251.6C1334.3 1250.7 1338.7 1249.2 1343.3 1249.6C1348 1250 1352.7 1251.3 1356.1 1254.2C1359.6 1257.1 1361.6 1260.6 1363.8 1267C1366 1273.4 1368.5 1288.3 1369.4 1292.6M1110.3 1292.8C1112.7 1288.1 1119.7 1275.1 1124.3 1264.9C1129 1254.7 1133.6 1241.6 1138.3 1231.4C1142.9 1221.2 1147.6 1211.4 1152.2 1203.5C1156.9 1195.6 1162 1188.8 1166.2 1184C1170.3 1179.1 1174.1 1175.6 1177.3 1174.2C1180.6 1172.8 1183.6 1173 1185.7 1175.6C1187.8 1178.1 1189.7 1182.1 1189.9 1189.5C1190.1 1197 1188.7 1210 1187.1 1220.2C1185.5 1230.5 1181.8 1242.1 1180.1 1250.9C1178.4 1259.8 1174.9 1270.5 1176.8 1273.3C1178.6 1276 1187.5 1271.4 1191.3 1267.7C1195.1 1264 1196.9 1254.9 1199.7 1250.9C1202.4 1247 1205.2 1244.9 1208 1244C1210.8 1243 1213.8 1243.3 1216.4 1245.3C1219 1247.4 1221.3 1251.4 1223.4 1256.5C1225.5 1261.6 1226.6 1270 1229 1276C1231.3 1282.1 1235.9 1290 1237.3 1292.8M1248.5 1292.8C1252 1291.5 1263.6 1286 1269.4 1285C1275.2 1284 1280.1 1285.3 1283.4 1286.7C1286.6 1288 1288 1291.8 1289 1292.8"/></defs>
<use href="#ln3" fill="none" stroke="#07314f" stroke-width="2.9"/>
<use href="#ln3" fill="none" stroke="#2fa0d0" stroke-width="1.45"/>
<path d="M1007.3 701.2C1009.1 701.8 1013.2 703.1 1018.1 704.8C1023.1 706.4 1029.4 707.9 1037.1 711C1044.8 714.2 1055.2 718.9 1064.3 723.8C1073.3 728.6 1082.4 734.2 1091.4 740.1C1100.5 745.9 1109.5 752.5 1118.6 759.1C1127.6 765.6 1138.1 773.8 1145.7 779.4C1153.3 785.1 1161.1 790.7 1164.1 793C1167.4 791.4 1176.8 785.8 1183.7 783.5C1190.6 781.1 1198.2 779.2 1205.4 778.9C1212.6 778.5 1219 780.2 1227.1 781.3C1235.2 782.4 1245.2 783.9 1254.2 785.4C1263.3 786.9 1272.3 788.9 1281.4 790.3C1290.4 791.6 1300.9 793.2 1308.5 793.5C1316.1 793.9 1322.2 793.9 1327.1 792.4C1332.1 791 1335.1 788.4 1338 784.8C1340.9 781.3 1342.3 775.3 1344.8 771.3C1347.3 767.2 1352 765.4 1352.9 760.4C1353.8 755.4 1351.1 747.3 1350.2 741.4C1349.3 735.5 1347 730.6 1347.5 725.1C1347.9 719.7 1350.4 712.5 1352.9 708.8C1355.4 705.2 1359 703 1362.4 703.4C1365.8 703.9 1369.7 707 1373.3 711.6C1376.9 716.1 1380.6 724.3 1384.1 730.6C1387.7 736.8 1391.8 745.4 1394.4 749C1397.1 752.6 1398.1 752.3 1399.9 752.3C1401.7 752.3 1405.2 753.5 1405.3 749C1405.4 744.5 1401.5 732.7 1400.4 725.1C1399.4 717.5 1398.1 709.5 1399.1 703.4C1400 697.3 1402.9 691.5 1405.8 688.5C1408.8 685.5 1412.8 684.8 1416.7 685.2C1420.5 685.7 1425.7 687.3 1428.9 691.2C1432.1 695.1 1434.2 701.8 1435.7 708.8C1437.1 715.9 1437.2 726.6 1437.6 733.3C1438 740 1437.8 746.4 1437.9 749C1442 749.7 1454.1 751.4 1462.8 753.1C1471.5 754.8 1480.9 756.7 1490 759.1C1499 761.4 1509 764 1517.1 767.2C1525.2 770.4 1532.5 774 1538.8 778.1C1545.1 782.1 1551 786.9 1555.1 791.6C1559.2 796.4 1562.3 801.8 1563.2 806.5C1564.1 811.3 1562.8 815.8 1560.5 820.1C1558.3 824.4 1554.6 827.9 1549.7 832.3C1544.7 836.8 1538.4 842.1 1530.7 846.7C1523 851.4 1512.6 855.8 1503.5 860.3C1494.5 864.7 1483.6 870 1476.4 873.3C1469.2 876.7 1464 877.7 1460.1 880.4C1456.3 883 1454 885.8 1453.3 889.3C1452.7 892.8 1453.6 896.3 1456 901.5C1458.5 906.7 1464 914.2 1468.3 920.5C1472.6 926.9 1479.1 935 1481.8 939.5C1484.5 944 1484.1 946.3 1484.5 947.7C1482.7 947.8 1479.1 949.1 1473.7 948.2C1468.3 947.3 1459.2 944.3 1452 942.2C1444.7 940.2 1434.8 936.7 1430.3 936C1425.7 935.3 1424.8 935.8 1424.8 938.2C1424.8 940.6 1427.1 945.6 1430.3 950.4C1433.4 955.1 1440.4 961.9 1443.8 966.7C1447.2 971.4 1449.9 975.5 1450.6 978.9C1451.3 982.3 1450.4 985.9 1447.9 987C1445.4 988.1 1442.2 987.7 1435.7 985.7C1429.1 983.6 1417.6 978.6 1408.6 974.8C1399.5 971 1388.2 965.4 1381.4 962.6C1374.6 959.7 1370.1 958.5 1367.8 957.7C1363.3 958.2 1352 959.6 1340.7 960.7C1329.4 961.8 1309.9 963.9 1300 964.5C1290.1 965.1 1291.3 964.8 1281.4 964.5C1271.5 964.2 1252 963.6 1240.7 962.6C1229.4 961.6 1222.6 960.1 1213.5 958.5C1204.5 956.9 1190.9 954 1186.4 953.1C1182.8 956.3 1171.5 966.2 1164.7 972.1C1157.9 978 1150.9 984.3 1145.7 988.4C1140.5 992.4 1136.1 995.8 1133.5 996.5C1130.9 997.2 1130 996.1 1130.2 992.4C1130.4 988.8 1133.1 981.4 1134.8 974.8C1136.6 968.2 1139.9 957.5 1140.8 953.1C1141.7 948.7 1140.4 949.2 1140.3 948.5C1137.5 949.5 1129.2 952.9 1124 954.4C1118.8 956 1112.2 958 1109.1 958C1105.9 958 1105.2 956.2 1105 954.4C1104.8 952.7 1105.4 951.1 1107.7 947.7C1110 944.3 1114.6 939.1 1118.6 934.1C1122.5 929.1 1129.2 920.5 1131.3 917.8C1131 915.6 1129.8 911 1129.4 904.2C1129 897.5 1128.4 886.2 1128.9 877.1C1129.3 868.1 1130.2 858.6 1132.1 850C1134 841.4 1137 832.8 1140.3 825.5C1143.5 818.3 1149.8 809.7 1151.7 806.5C1149.8 804.5 1145.8 799.5 1140.3 794.3C1134.7 789.1 1126.7 781.9 1118.6 775.3C1110.4 768.8 1100.5 761.3 1091.4 755C1082.4 748.7 1073.3 742.9 1064.3 737.3C1055.2 731.8 1044.8 725.7 1037.1 721.9C1029.4 718 1023.1 716 1018.1 714.3C1013.2 712.6 1009.1 712 1007.3 711.6C1007.3 709.8 1007.3 703 1007.3 701.2Z" fill="#00a9dc"/>
<ellipse cx="1452.8" cy="783.1" rx="10.1" ry="11.3" transform="rotate(-8 1452.8 783.1)" fill="#1d2838"/>
<path d="M1429.1 779.1C1428.8 780.6 1426.8 784.6 1427.2 787.9C1427.6 791.2 1429.3 796 1431.4 799.1C1433.5 802.2 1437.2 804.8 1439.8 806.5C1442.4 808.2 1444.9 809.1 1447.2 809.3C1449.5 809.5 1451.5 808.6 1453.7 807.5C1455.9 806.4 1459.2 803.4 1460.3 802.6C1458.9 802.5 1454.9 802.9 1451.9 802.3C1449 801.7 1445.2 800.7 1442.6 799.1C1440 797.5 1437.9 794.9 1436.1 792.6C1434.3 790.3 1433.1 787.4 1431.9 785.1C1430.7 782.9 1429.6 780.1 1429.1 779.1Z" fill="#1d2838"/>
<path d="M1444 847.5C1447.6 845.5 1459 838.8 1465.8 835.4C1472.5 832 1480.7 828.3 1484.5 827.2C1488.3 826.1 1489.7 827.5 1488.9 828.9C1488.1 830.3 1484.3 833.1 1479.8 835.4C1475.3 837.7 1468.1 840.8 1462.1 842.8C1456.1 844.8 1447 846.7 1444 847.5Z" fill="#1d2838"/>
<path d="M1462.1 868.4C1464 866 1469.3 858.4 1473.3 854C1477.3 849.6 1483.2 844.3 1486.3 841.9C1489.4 839.5 1490.7 839.6 1491.9 839.6C1493.1 839.6 1494.1 840.3 1493.6 841.9C1493.1 843.5 1491.9 846.2 1489.1 849.3C1486.3 852.4 1481.5 857.3 1477 860.5C1472.5 863.7 1464.6 867.1 1462.1 868.4Z" fill="#1d2838"/>
<path d="M1531.5 764Q1539.8 742.5 1537.7 719.5Q1529.4 741 1531.5 764Z" fill="#00a9dc"/>
<path d="M1543.3 768Q1561.4 749.9 1567.2 725Q1549.1 743.1 1543.3 768Z" fill="#00a9dc"/>
</svg>
<div id="lay">
<div id="w1">
<svg class="abs" style="left:5px;top:5px" width="24" height="22" viewBox="0 0 24 22"><defs><linearGradient id="mg40" x1="0" y1="0" x2="0" y2="1"><stop offset="0" stop-color="#6d80a4"/><stop offset=".45" stop-color="#44659a"/><stop offset=".55" stop-color="#28508e"/><stop offset="1" stop-color="#3568a8"/></linearGradient></defs><ellipse cx="10" cy="19.4" rx="7.5" ry="1.6" fill="#000" opacity=".12"/><ellipse cx="10" cy="17" rx="4.6" ry="2" fill="#d3d7cf" stroke="#555753" stroke-width=".9"/><rect x="0.5" y="0.5" width="19" height="15" rx="1.6" fill="#eeeeec" stroke="#5a5c58"/><rect x="2" y="2" width="14" height="11" fill="#27278c"/><rect x="3" y="3" width="12" height="9" fill="url(#mg40)"/><path d="M3 3H15V5.5L3 10Z" fill="#fff" opacity=".13"/><g fill="#b9bbb6"><rect x="17" y="3" width="1" height="1"/><rect x="17" y="5" width="1" height="1"/><rect x="17" y="7" width="1" height="1"/><rect x="17" y="9" width="1" height="1"/></g></svg>
<div class="wt" style="left:25px;top:0;width:1538px;line-height:33px;letter-spacing:.1px;color:#999d9d">H1CDS_DIGIVIDEO_OVERVIEW.adl</div>
<svg class="abs" style="left:1568px;top:11px" width="80" height="10" viewBox="0 0 80 10" fill="none" stroke="#868a8b" stroke-width="2"><path d="M0.7 7.3L4.5 3.5L8.3 7.3"/><path d="M23 8H32"/><rect x="47" y="1" width="7" height="7"/><path d="M69.7 0.7L77.3 8.3M77.3 0.7L69.7 8.3"/></svg>
<div class="abs" style="left:4px;top:29px;width:1648px;height:369px;background:#bbb"></div>
<div class="abs" style="left:4px;top:29px;width:1648px;height:30px;background:#0a00b8"></div>
<span class="m" style="left:13px;top:35.4px;color:#fff;">LHO Digital Video Camera</span>
<span class="m" style="left:1478px;top:35.4px;color:#fff;">Wed Mar 11 16:11:36 2026</span>
<div class="abs" style="left:8px;top:63px;width:5px;height:31px;box-sizing:border-box;border:1px solid #000;background:#e6e6e6"></div>
<div class="b bl" style="left:13px;top:63px;width:200px;height:30px;"></div>
<span class="m" style="left:40.5px;top:72.4px;">ALS X (CAM04)</span>
<div class="b bl" style="left:213px;top:63px;width:100px;height:30px;"></div>
<div class="abs" style="left:244px;top:70px;width:2px;height:12px;background:#000"></div>
<div class="abs" style="left:244px;top:84px;width:2px;height:2px;background:#000"></div>
<span class="m" style="left:255px;top:72.4px;">Launch</span>
<div class="b bl" style="left:313px;top:63px;width:50px;height:30px;"></div>
<span class="m" style="left:328.5px;top:72.4px;">INFO</span>
<div class="b bl" style="left:363px;top:63px;width:50px;height:30px;"></div>
<span class="m" style="left:379px;top:72.4px;">VID4</span>
<div class="abs" style="left:8px;top:93px;width:5px;height:31px;box-sizing:border-box;border:1px solid #000;background:#c4c4c4"></div>
<div class="b bd" style="left:13px;top:93px;width:200px;height:30px;"></div>
<span class="m" style="left:40.5px;top:102.4px;">ALS Y (CAM05)</span>
<div class="b bd" style="left:213px;top:93px;width:100px;height:30px;"></div>
<div class="abs" style="left:244px;top:100px;width:2px;height:12px;background:#000"></div>
<div class="abs" style="left:244px;top:114px;width:2px;height:2px;background:#000"></div>
<span class="m" style="left:255px;top:102.4px;">Launch</span>
<div class="b bd" style="left:313px;top:93px;width:50px;height:30px;"></div>
<span class="m" style="left:328.5px;top:102.4px;">INFO</span>
<div class="b bd" style="left:363px;top:93px;width:50px;height:30px;"></div>
<span class="m" style="left:379px;top:102.4px;">VID4</span>
<div class="abs" style="left:8px;top:123px;width:5px;height:31px;box-sizing:border-box;border:1px solid #000;background:#e6e6e6"></div>
<div class="b bl" style="left:13px;top:123px;width:200px;height:30px;"></div>
<span class="m" style="left:40.5px;top:132.4px;">AS AIR ISCT6 (CAM16)</span>
<div class="b bl" style="left:213px;top:123px;width:100px;height:30px;"></div>
<div class="abs" style="left:244px;top:130px;width:2px;height:12px;background:#000"></div>
<div class="abs" style="left:244px;top:144px;width:2px;height:2px;background:#000"></div>
<span class="m" style="left:255px;top:132.4px;">Launch</span>
<div class="b bl" style="left:313px;top:123px;width:50px;height:30px;"></div>
<span class="m" style="left:328.5px;top:132.4px;">INFO</span>
<div class="b bl" style="left:363px;top:123px;width:50px;height:30px;"></div>
<span class="m" style="left:379px;top:132.4px;">VID4</span>
<div class="abs" style="left:8px;top:153px;width:5px;height:31px;box-sizing:border-box;border:1px solid #000;background:#3b5ebd"></div>
<div class="b bd" style="left:13px;top:153px;width:200px;height:30px;"></div>
<span class="m" style="left:40.5px;top:162.4px;">BS (CAM26)</span>
<div class="b bd" style="left:213px;top:153px;width:100px;height:30px;"></div>
<div class="abs" style="left:244px;top:160px;width:2px;height:12px;background:#000"></div>
<div class="abs" style="left:244px;top:174px;width:2px;height:2px;background:#000"></div>
<span class="m" style="left:255px;top:162.4px;">Launch</span>
<div class="b bd" style="left:313px;top:153px;width:50px;height:30px;"></div>
<span class="m" style="left:328.5px;top:162.4px;">INFO</span>
<div class="b bd" style="left:363px;top:153px;width:50px;height:30px;"></div>
<span class="m" style="left:379px;top:162.4px;color:#f00;">VID2</span>
<div class="abs" style="left:8px;top:183px;width:5px;height:31px;box-sizing:border-box;border:1px solid #000;background:#4a8df2"></div>
<div class="b bl" style="left:13px;top:183px;width:200px;height:30px;"></div>
<span class="m" style="left:40.5px;top:192.4px;">ETMX (CAM25)</span>
<div class="b bl" style="left:213px;top:183px;width:100px;height:30px;"></div>
<div class="abs" style="left:244px;top:190px;width:2px;height:12px;background:#000"></div>
<div class="abs" style="left:244px;top:204px;width:2px;height:2px;background:#000"></div>
<span class="m" style="left:255px;top:192.4px;">Launch</span>
<div class="b bl" style="left:313px;top:183px;width:50px;height:30px;"></div>
<span class="m" style="left:328.5px;top:192.4px;">INFO</span>
<div class="b bl" style="left:363px;top:183px;width:50px;height:30px;"></div>
<span class="m" style="left:379px;top:192.4px;">VID5</span>
<div class="abs" style="left:8px;top:213px;width:5px;height:31px;box-sizing:border-box;border:1px solid #000;background:#3b5ebd"></div>
<div class="b bd" style="left:13px;top:213px;width:200px;height:30px;"></div>
<span class="m" style="left:40.5px;top:222.4px;">ETMY (CAM27)</span>
<div class="b bd" style="left:213px;top:213px;width:100px;height:30px;"></div>
<div class="abs" style="left:244px;top:220px;width:2px;height:12px;background:#000"></div>
<div class="abs" style="left:244px;top:234px;width:2px;height:2px;background:#000"></div>
<span class="m" style="left:255px;top:222.4px;">Launch</span>
<div class="b bd" style="left:313px;top:213px;width:50px;height:30px;"></div>
<span class="m" style="left:328.5px;top:222.4px;">INFO</span>
<div class="b bd" style="left:363px;top:213px;width:50px;height:30px;"></div>
<span class="m" style="left:379px;top:222.4px;">VID5</span>
<div class="abs" style="left:8px;top:243px;width:5px;height:31px;box-sizing:border-box;border:1px solid #000;background:#e6e6e6"></div>
<div class="b bl" style="left:13px;top:243px;width:200px;height:30px;"></div>
<span class="m" style="left:40.5px;top:252.4px;">FC REFL (CAM01)</span>
<div class="b bl" style="left:213px;top:243px;width:100px;height:30px;"></div>
<div class="abs" style="left:244px;top:250px;width:2px;height:12px;background:#000"></div>
<div class="abs" style="left:244px;top:264px;width:2px;height:2px;background:#000"></div>
<span class="m" style="left:255px;top:252.4px;">Launch</span>
<div class="b bl" style="left:313px;top:243px;width:50px;height:30px;"></div>
<span class="m" style="left:328.5px;top:252.4px;">INFO</span>
<div class="b bl" style="left:363px;top:243px;width:50px;height:30px;"></div>
<span class="m" style="left:379px;top:252.4px;">VID4</span>
<div class="abs" style="left:8px;top:273px;width:5px;height:31px;box-sizing:border-box;border:1px solid #000;background:#c4c4c4"></div>
<div class="b bd" style="left:13px;top:273px;width:200px;height:30px;"></div>
<span class="m" style="left:40.5px;top:282.4px;">FC1 (CAM36)</span>
<div class="b bd" style="left:213px;top:273px;width:100px;height:30px;"></div>
<div class="abs" style="left:244px;top:280px;width:2px;height:12px;background:#000"></div>
<div class="abs" style="left:244px;top:294px;width:2px;height:2px;background:#000"></div>
<span class="m" style="left:255px;top:282.4px;">Launch</span>
<div class="b bd" style="left:313px;top:273px;width:50px;height:30px;"></div>
<span class="m" style="left:328.5px;top:282.4px;">INFO</span>
<div class="b bd" style="left:363px;top:273px;width:50px;height:30px;"></div>
<span class="m" style="left:379px;top:282.4px;">VID5</span>
<div class="abs" style="left:8px;top:303px;width:5px;height:31px;box-sizing:border-box;border:1px solid #000;background:#e6e6e6"></div>
<div class="b bl" style="left:13px;top:303px;width:200px;height:30px;"></div>
<span class="m" style="left:40.5px;top:312.4px;">FC2 (CAM34)</span>
<div class="b bl" style="left:213px;top:303px;width:100px;height:30px;"></div>
<div class="abs" style="left:244px;top:310px;width:2px;height:12px;background:#000"></div>
<div class="abs" style="left:244px;top:324px;width:2px;height:2px;background:#000"></div>
<span class="m" style="left:255px;top:312.4px;">Launch</span>
<div class="b bl" style="left:313px;top:303px;width:50px;height:30px;"></div>
<span class="m" style="left:328.5px;top:312.4px;">INFO</span>
<div class="b bl" style="left:363px;top:303px;width:50px;height:30px;"></div>
<span class="m" style="left:379px;top:312.4px;">VID5</span>
<div class="abs" style="left:8px;top:333px;width:5px;height:31px;box-sizing:border-box;border:1px solid #000;background:#3b5ebd"></div>
<div class="b bd" style="left:13px;top:333px;width:200px;height:30px;"></div>
<span class="m" style="left:40.5px;top:342.4px;">FC_TRANS_B (CAM32)</span>
<div class="b bd" style="left:213px;top:333px;width:100px;height:30px;"></div>
<div class="abs" style="left:244px;top:340px;width:2px;height:12px;background:#000"></div>
<div class="abs" style="left:244px;top:354px;width:2px;height:2px;background:#000"></div>
<span class="m" style="left:255px;top:342.4px;">Launch</span>
<div class="b bd" style="left:313px;top:333px;width:50px;height:30px;"></div>
<span class="m" style="left:328.5px;top:342.4px;">INFO</span>
<div class="b bd" style="left:363px;top:333px;width:50px;height:30px;"></div>
<span class="m" style="left:379px;top:342.4px;">VID5</span>
<div class="abs" style="left:418px;top:63px;width:5px;height:31px;box-sizing:border-box;border:1px solid #000;background:#e6e6e6"></div>
<div class="b bl" style="left:423px;top:63px;width:200px;height:30px;"></div>
<span class="m" style="left:450.5px;top:72.4px;">FC_TRANS_GR (CAM33)</span>
<div class="b bl" style="left:623px;top:63px;width:100px;height:30px;"></div>
<div class="abs" style="left:654px;top:70px;width:2px;height:12px;background:#000"></div>
<div class="abs" style="left:654px;top:84px;width:2px;height:2px;background:#000"></div>
<span class="m" style="left:665px;top:72.4px;">Launch</span>
<div class="b bl" style="left:723px;top:63px;width:50px;height:30px;"></div>
<span class="m" style="left:738.5px;top:72.4px;">INFO</span>
<div class="b bl" style="left:773px;top:63px;width:50px;height:30px;"></div>
<span class="m" style="left:789px;top:72.4px;">VID5</span>
<div class="abs" style="left:418px;top:93px;width:5px;height:31px;box-sizing:border-box;border:1px solid #000;background:#c4c4c4"></div>
<div class="b bd" style="left:423px;top:93px;width:200px;height:30px;"></div>
<span class="m" style="left:450.5px;top:102.4px;">IOT1 JAC (CAM38)</span>
<div class="b bd" style="left:623px;top:93px;width:100px;height:30px;"></div>
<div class="abs" style="left:654px;top:100px;width:2px;height:12px;background:#000"></div>
<div class="abs" style="left:654px;top:114px;width:2px;height:2px;background:#000"></div>
<span class="m" style="left:665px;top:102.4px;">Launch</span>
<div class="b bd" style="left:723px;top:93px;width:50px;height:30px;"></div>
<span class="m" style="left:738.5px;top:102.4px;">INFO</span>
<div class="b bd" style="left:773px;top:93px;width:50px;height:30px;"></div>
<span class="m" style="left:789px;top:102.4px;color:#2a8a1a;">VID6</span>
<div class="abs" style="left:418px;top:123px;width:5px;height:31px;box-sizing:border-box;border:1px solid #000;background:#e6e6e6"></div>
<div class="b bl" style="left:423px;top:123px;width:200px;height:30px;"></div>
<span class="m" style="left:450.5px;top:132.4px;">ISCT1 REFL (CAM37)</span>
<div class="b bl" style="left:623px;top:123px;width:100px;height:30px;"></div>
<div class="abs" style="left:654px;top:130px;width:2px;height:12px;background:#000"></div>
<div class="abs" style="left:654px;top:144px;width:2px;height:2px;background:#000"></div>
<span class="m" style="left:665px;top:132.4px;">Launch</span>
<div class="b bl" style="left:723px;top:123px;width:50px;height:30px;"></div>
<span class="m" style="left:738.5px;top:132.4px;">INFO</span>
<div class="b bl" style="left:773px;top:123px;width:50px;height:30px;"></div>
<span class="m" style="left:789px;top:132.4px;">VID5</span>
<div class="abs" style="left:418px;top:153px;width:5px;height:31px;box-sizing:border-box;border:1px solid #000;background:#3b5ebd"></div>
<div class="b bd" style="left:423px;top:153px;width:200px;height:30px;"></div>
<span class="m" style="left:450.5px;top:162.4px;">ITMX (CAM21)</span>
<div class="b bd" style="left:623px;top:153px;width:100px;height:30px;"></div>
<div class="abs" style="left:654px;top:160px;width:2px;height:12px;background:#000"></div>
<div class="abs" style="left:654px;top:174px;width:2px;height:2px;background:#000"></div>
<span class="m" style="left:665px;top:162.4px;">Launch</span>
<div class="b bd" style="left:723px;top:153px;width:50px;height:30px;"></div>
<span class="m" style="left:738.5px;top:162.4px;">INFO</span>
<div class="b bd" style="left:773px;top:153px;width:50px;height:30px;"></div>
<span class="m" style="left:789px;top:162.4px;color:#f00;">VID2</span>
<div class="abs" style="left:418px;top:183px;width:5px;height:31px;box-sizing:border-box;border:1px solid #000;background:#4a8df2"></div>
<div class="b bl" style="left:423px;top:183px;width:200px;height:30px;"></div>
<span class="m" style="left:450.5px;top:192.4px;">ITMX Green (CAM22)</span>
<div class="b bl" style="left:623px;top:183px;width:100px;height:30px;"></div>
<div class="abs" style="left:654px;top:190px;width:2px;height:12px;background:#000"></div>
<div class="abs" style="left:654px;top:204px;width:2px;height:2px;background:#000"></div>
<span class="m" style="left:665px;top:192.4px;">Launch</span>
<div class="b bl" style="left:723px;top:183px;width:50px;height:30px;"></div>
<span class="m" style="left:738.5px;top:192.4px;">INFO</span>
<div class="b bl" style="left:773px;top:183px;width:50px;height:30px;"></div>
<span class="m" style="left:789px;top:192.4px;color:#f00;">VID2</span>
<div class="abs" style="left:418px;top:213px;width:5px;height:31px;box-sizing:border-box;border:1px solid #000;background:#3b5ebd"></div>
<div class="b bd" style="left:423px;top:213px;width:200px;height:30px;"></div>
<span class="m" style="left:450.5px;top:222.4px;">ITMY (CAM23)</span>
<div class="b bd" style="left:623px;top:213px;width:100px;height:30px;"></div>
<div class="abs" style="left:654px;top:220px;width:2px;height:12px;background:#000"></div>
<div class="abs" style="left:654px;top:234px;width:2px;height:2px;background:#000"></div>
<span class="m" style="left:665px;top:222.4px;">Launch</span>
<div class="b bd" style="left:723px;top:213px;width:50px;height:30px;"></div>
<span class="m" style="left:738.5px;top:222.4px;">INFO</span>
<div class="b bd" style="left:773px;top:213px;width:50px;height:30px;"></div>
<span class="m" style="left:789px;top:222.4px;color:#f00;">VID2</span>
<div class="abs" style="left:418px;top:243px;width:5px;height:31px;box-sizing:border-box;border:1px solid #000;background:#4a8df2"></div>
<div class="b bl" style="left:423px;top:243px;width:200px;height:30px;"></div>
<span class="m" style="left:450.5px;top:252.4px;">ITMY Green (CAM24)</span>
<div class="b bl" style="left:623px;top:243px;width:100px;height:30px;"></div>
<div class="abs" style="left:654px;top:250px;width:2px;height:12px;background:#000"></div>
<div class="abs" style="left:654px;top:264px;width:2px;height:2px;background:#000"></div>
<span class="m" style="left:665px;top:252.4px;">Launch</span>
<div class="b bl" style="left:723px;top:243px;width:50px;height:30px;"></div>
<span class="m" style="left:738.5px;top:252.4px;">INFO</span>
<div class="b bl" style="left:773px;top:243px;width:50px;height:30px;"></div>
<span class="m" style="left:789px;top:252.4px;color:#f00;">VID2</span>
<div class="abs" style="left:418px;top:273px;width:5px;height:31px;box-sizing:border-box;border:1px solid #000;background:#c4c4c4"></div>
<div class="b bd" style="left:423px;top:273px;width:200px;height:30px;"></div>
<span class="m" style="left:450.5px;top:282.4px;">MC REFL (CAM02)</span>
<div class="b bd" style="left:623px;top:273px;width:100px;height:30px;"></div>
<div class="abs" style="left:654px;top:280px;width:2px;height:12px;background:#000"></div>
<div class="abs" style="left:654px;top:294px;width:2px;height:2px;background:#000"></div>
<span class="m" style="left:665px;top:282.4px;">Launch</span>
<div class="b bd" style="left:723px;top:273px;width:50px;height:30px;"></div>
<span class="m" style="left:738.5px;top:282.4px;">INFO</span>
<div class="b bd" style="left:773px;top:273px;width:50px;height:30px;"></div>
<span class="m" style="left:789px;top:282.4px;">VID4</span>
<div class="abs" style="left:418px;top:303px;width:5px;height:31px;box-sizing:border-box;border:1px solid #000;background:#e6e6e6"></div>
<div class="b bl" style="left:423px;top:303px;width:200px;height:30px;"></div>
<span class="m" style="left:450.5px;top:312.4px;">MC TRANS (CAM03)</span>
<div class="b bl" style="left:623px;top:303px;width:100px;height:30px;"></div>
<div class="abs" style="left:654px;top:310px;width:2px;height:12px;background:#000"></div>
<div class="abs" style="left:654px;top:324px;width:2px;height:2px;background:#000"></div>
<span class="m" style="left:665px;top:312.4px;">Launch</span>
<div class="b bl" style="left:723px;top:303px;width:50px;height:30px;"></div>
<span class="m" style="left:738.5px;top:312.4px;">INFO</span>
<div class="b bl" style="left:773px;top:303px;width:50px;height:30px;"></div>
<span class="m" style="left:789px;top:312.4px;">VID4</span>
<div class="abs" style="left:418px;top:333px;width:5px;height:31px;box-sizing:border-box;border:1px solid #000;background:#c4c4c4"></div>
<div class="b bd" style="left:423px;top:333px;width:200px;height:30px;"></div>
<span class="m" style="left:450.5px;top:342.4px;">MC1 (CAM11)</span>
<div class="b bd" style="left:623px;top:333px;width:100px;height:30px;"></div>
<div class="abs" style="left:654px;top:340px;width:2px;height:12px;background:#000"></div>
<div class="abs" style="left:654px;top:354px;width:2px;height:2px;background:#000"></div>
<span class="m" style="left:665px;top:342.4px;">Launch</span>
<div class="b bd" style="left:723px;top:333px;width:50px;height:30px;"></div>
<span class="m" style="left:738.5px;top:342.4px;">INFO</span>
<div class="b bd" style="left:773px;top:333px;width:50px;height:30px;"></div>
<span class="m" style="left:789px;top:342.4px;">VID4</span>
<div class="abs" style="left:828px;top:63px;width:5px;height:31px;box-sizing:border-box;border:1px solid #000;background:#e6e6e6"></div>
<div class="b bl" style="left:833px;top:63px;width:200px;height:30px;"></div>
<span class="m" style="left:860.5px;top:72.4px;">MC2 (CAM07)</span>
<div class="b bl" style="left:1033px;top:63px;width:100px;height:30px;"></div>
<div class="abs" style="left:1064px;top:70px;width:2px;height:12px;background:#000"></div>
<div class="abs" style="left:1064px;top:84px;width:2px;height:2px;background:#000"></div>
<span class="m" style="left:1075px;top:72.4px;">Launch</span>
<div class="b bl" style="left:1133px;top:63px;width:50px;height:30px;"></div>
<span class="m" style="left:1148.5px;top:72.4px;">INFO</span>
<div class="b bl" style="left:1183px;top:63px;width:50px;height:30px;"></div>
<span class="m" style="left:1199px;top:72.4px;">VID4</span>
<div class="abs" style="left:828px;top:93px;width:5px;height:31px;box-sizing:border-box;border:1px solid #000;background:#c4c4c4"></div>
<div class="b bd" style="left:833px;top:93px;width:200px;height:30px;"></div>
<span class="m" style="left:860.5px;top:102.4px;">MC3 (CAM12)</span>
<div class="b bd" style="left:1033px;top:93px;width:100px;height:30px;"></div>
<div class="abs" style="left:1064px;top:100px;width:2px;height:12px;background:#000"></div>
<div class="abs" style="left:1064px;top:114px;width:2px;height:2px;background:#000"></div>
<span class="m" style="left:1075px;top:102.4px;">Launch</span>
<div class="b bd" style="left:1133px;top:93px;width:50px;height:30px;"></div>
<span class="m" style="left:1148.5px;top:102.4px;">INFO</span>
<div class="b bd" style="left:1183px;top:93px;width:50px;height:30px;"></div>
<span class="m" style="left:1199px;top:102.4px;">VID4</span>
<div class="abs" style="left:828px;top:123px;width:5px;height:31px;box-sizing:border-box;border:1px solid #000;background:#e6e6e6"></div>
<div class="b bl" style="left:833px;top:123px;width:200px;height:30px;"></div>
<span class="m" style="left:860.5px;top:132.4px;">OMC HAM6 TRANS (CAM15)</span>
<div class="b bl" style="left:1033px;top:123px;width:100px;height:30px;"></div>
<div class="abs" style="left:1064px;top:130px;width:2px;height:12px;background:#000"></div>
<div class="abs" style="left:1064px;top:144px;width:2px;height:2px;background:#000"></div>
<span class="m" style="left:1075px;top:132.4px;">Launch</span>
<div class="b bl" style="left:1133px;top:123px;width:50px;height:30px;"></div>
<span class="m" style="left:1148.5px;top:132.4px;">INFO</span>
<div class="b bl" style="left:1183px;top:123px;width:50px;height:30px;"></div>
<span class="m" style="left:1199px;top:132.4px;">VID5</span>
<div class="abs" style="left:828px;top:153px;width:5px;height:31px;box-sizing:border-box;border:1px solid #000;background:#c4c4c4"></div>
<div class="b bd" style="left:833px;top:153px;width:200px;height:30px;"></div>
<span class="m" style="left:860.5px;top:162.4px;">POP Air (CAM30)</span>
<div class="b bd" style="left:1033px;top:153px;width:100px;height:30px;"></div>
<div class="abs" style="left:1064px;top:160px;width:2px;height:12px;background:#000"></div>
<div class="abs" style="left:1064px;top:174px;width:2px;height:2px;background:#000"></div>
<span class="m" style="left:1075px;top:162.4px;">Launch</span>
<div class="b bd" style="left:1133px;top:153px;width:50px;height:30px;"></div>
<span class="m" style="left:1148.5px;top:162.4px;">INFO</span>
<div class="b bd" style="left:1183px;top:153px;width:50px;height:30px;"></div>
<span class="m" style="left:1199px;top:162.4px;">VID5</span>
<div class="abs" style="left:828px;top:183px;width:5px;height:31px;box-sizing:border-box;border:1px solid #000;background:#e6e6e6"></div>
<div class="b bl" style="left:833px;top:183px;width:200px;height:30px;"></div>
<span class="m" style="left:860.5px;top:192.4px;">PR2 (CAM08)</span>
<div class="b bl" style="left:1033px;top:183px;width:100px;height:30px;"></div>
<div class="abs" style="left:1064px;top:190px;width:2px;height:12px;background:#000"></div>
<div class="abs" style="left:1064px;top:204px;width:2px;height:2px;background:#000"></div>
<span class="m" style="left:1075px;top:192.4px;">Launch</span>
<div class="b bl" style="left:1133px;top:183px;width:50px;height:30px;"></div>
<span class="m" style="left:1148.5px;top:192.4px;">INFO</span>
<div class="b bl" style="left:1183px;top:183px;width:50px;height:30px;"></div>
<span class="m" style="left:1199px;top:192.4px;">VID4</span>
<div class="abs" style="left:828px;top:213px;width:5px;height:31px;box-sizing:border-box;border:1px solid #000;background:#c4c4c4"></div>
<div class="b bd" style="left:833px;top:213px;width:200px;height:30px;"></div>
<span class="m" style="left:860.5px;top:222.4px;">PR3 (CAM14)</span>
<div class="b bd" style="left:1033px;top:213px;width:100px;height:30px;"></div>
<div class="abs" style="left:1064px;top:220px;width:2px;height:12px;background:#000"></div>
<div class="abs" style="left:1064px;top:234px;width:2px;height:2px;background:#000"></div>
<span class="m" style="left:1075px;top:222.4px;">Launch</span>
<div class="b bd" style="left:1133px;top:213px;width:50px;height:30px;"></div>
<span class="m" style="left:1148.5px;top:222.4px;">INFO</span>
<div class="b bd" style="left:1183px;top:213px;width:50px;height:30px;"></div>
<span class="m" style="left:1199px;top:222.4px;">VID4</span>
<div class="abs" style="left:828px;top:243px;width:5px;height:31px;box-sizing:border-box;border:1px solid #000;background:#e6e6e6"></div>
<div class="b bl" style="left:833px;top:243px;width:200px;height:30px;"></div>
<span class="m" style="left:860.5px;top:252.4px;">PRM (CAM13)</span>
<div class="b bl" style="left:1033px;top:243px;width:100px;height:30px;"></div>
<div class="abs" style="left:1064px;top:250px;width:2px;height:12px;background:#000"></div>
<div class="abs" style="left:1064px;top:264px;width:2px;height:2px;background:#000"></div>
<span class="m" style="left:1075px;top:252.4px;">Launch</span>
<div class="b bl" style="left:1133px;top:243px;width:50px;height:30px;"></div>
<span class="m" style="left:1148.5px;top:252.4px;">INFO</span>
<div class="b bl" style="left:1183px;top:243px;width:50px;height:30px;"></div>
<span class="m" style="left:1199px;top:252.4px;">VID4</span>
<div class="abs" style="left:828px;top:273px;width:5px;height:31px;box-sizing:border-box;border:1px solid #000;background:#c4c4c4"></div>
<div class="b bd" style="left:833px;top:273px;width:200px;height:30px;"></div>
<span class="m" style="left:860.5px;top:282.4px;">SHG_TRANS (CAM18)</span>
<div class="b bd" style="left:1033px;top:273px;width:100px;height:30px;"></div>
<div class="abs" style="left:1064px;top:280px;width:2px;height:12px;background:#000"></div>
<div class="abs" style="left:1064px;top:294px;width:2px;height:2px;background:#000"></div>
<span class="m" style="left:1075px;top:282.4px;">Launch</span>
<div class="b bd" style="left:1133px;top:273px;width:50px;height:30px;"></div>
<span class="m" style="left:1148.5px;top:282.4px;">INFO</span>
<div class="b bd" style="left:1183px;top:273px;width:50px;height:30px;"></div>
<span class="m" style="left:1199px;top:282.4px;">VID5</span>
<div class="abs" style="left:828px;top:303px;width:5px;height:31px;box-sizing:border-box;border:1px solid #000;background:#e6e6e6"></div>
<div class="b bl" style="left:833px;top:303px;width:200px;height:30px;"></div>
<span class="m" style="left:860.5px;top:312.4px;">SQZ OPO GR TRANS (CAM19)</span>
<div class="b bl" style="left:1033px;top:303px;width:100px;height:30px;"></div>
<div class="abs" style="left:1064px;top:310px;width:2px;height:12px;background:#000"></div>
<div class="abs" style="left:1064px;top:324px;width:2px;height:2px;background:#000"></div>
<span class="m" style="left:1075px;top:312.4px;">Launch</span>
<div class="b bl" style="left:1133px;top:303px;width:50px;height:30px;"></div>
<span class="m" style="left:1148.5px;top:312.4px;">INFO</span>
<div class="b bl" style="left:1183px;top:303px;width:50px;height:30px;"></div>
<span class="m" style="left:1199px;top:312.4px;">VID4</span>
<div class="abs" style="left:828px;top:333px;width:5px;height:31px;box-sizing:border-box;border:1px solid #000;background:#c4c4c4"></div>
<div class="b bd" style="left:833px;top:333px;width:200px;height:30px;"></div>
<span class="m" style="left:860.5px;top:342.4px;">SQZT7 IR TRANS (CAM20)</span>
<div class="b bd" style="left:1033px;top:333px;width:100px;height:30px;"></div>
<div class="abs" style="left:1064px;top:340px;width:2px;height:12px;background:#000"></div>
<div class="abs" style="left:1064px;top:354px;width:2px;height:2px;background:#000"></div>
<span class="m" style="left:1075px;top:342.4px;">Launch</span>
<div class="b bd" style="left:1133px;top:333px;width:50px;height:30px;"></div>
<span class="m" style="left:1148.5px;top:342.4px;">INFO</span>
<div class="b bd" style="left:1183px;top:333px;width:50px;height:30px;"></div>
<span class="m" style="left:1199px;top:342.4px;">VID4</span>
<div class="abs" style="left:1238px;top:63px;width:5px;height:31px;box-sizing:border-box;border:1px solid #000;background:#e6e6e6"></div>
<div class="b bl" style="left:1243px;top:63px;width:200px;height:30px;"></div>
<span class="m" style="left:1270.5px;top:72.4px;">SRM (CAM17)</span>
<div class="b bl" style="left:1443px;top:63px;width:100px;height:30px;"></div>
<div class="abs" style="left:1474px;top:70px;width:2px;height:12px;background:#000"></div>
<div class="abs" style="left:1474px;top:84px;width:2px;height:2px;background:#000"></div>
<span class="m" style="left:1485px;top:72.4px;">Launch</span>
<div class="b bl" style="left:1543px;top:63px;width:50px;height:30px;"></div>
<span class="m" style="left:1558.5px;top:72.4px;">INFO</span>
<div class="b bl" style="left:1593px;top:63px;width:50px;height:30px;"></div>
<span class="m" style="left:1609px;top:72.4px;">VID4</span>
<span class="m" style="left:13px;top:374.4px;">Generated with /opt/rtcds/userapps/release/cds/h1/scripts/generate_digivideo_overview_medm.py using /opt/rtcds/lho/h1/cds/camera/camera.yaml on Wed Mar 11 15:40:17 2026</span>
<div class="abs" style="left:1452px;top:373px;width:180px;height:25px;box-sizing:border-box;background:#333389;border:2px solid;border-color:#8d8dc4 #1a1a55 #1a1a55 #8d8dc4"></div>
<svg class="abs" style="left:1474px;top:378px" width="16" height="16" viewBox="0 0 16 16"><rect x="1.5" y="1.5" width="8" height="8" fill="#333389" stroke="#fff" stroke-width="1.2"/><rect x="5.5" y="5.5" width="8" height="8" fill="#333389" stroke="#fff" stroke-width="1.2"/></svg>
<span class="m" style="left:1490px;top:379.9px;color:#fff;">Traditional Overview</span>
</div>
<div id="w2">
<svg class="abs" style="left:6px;top:4px" width="24" height="22" viewBox="0 0 24 22"><defs><linearGradient id="mg46" x1="0" y1="0" x2="0" y2="1"><stop offset="0" stop-color="#6d80a4"/><stop offset=".45" stop-color="#44659a"/><stop offset=".55" stop-color="#28508e"/><stop offset="1" stop-color="#3568a8"/></linearGradient></defs><ellipse cx="10" cy="19.4" rx="7.5" ry="1.6" fill="#000" opacity=".12"/><ellipse cx="10" cy="17" rx="4.6" ry="2" fill="#d3d7cf" stroke="#555753" stroke-width=".9"/><rect x="0.5" y="0.5" width="19" height="15" rx="1.6" fill="#eeeeec" stroke="#5a5c58"/><rect x="2" y="2" width="14" height="11" fill="#27278c"/><rect x="3" y="3" width="12" height="9" fill="url(#mg46)"/><path d="M3 3H15V5.5L3 10Z" fill="#fff" opacity=".13"/><g fill="#b9bbb6"><rect x="17" y="3" width="1" height="1"/><rect x="17" y="5" width="1" height="1"/><rect x="17" y="7" width="1" height="1"/><rect x="17" y="9" width="1" height="1"/></g></svg>
<div class="wt" style="left:25px;top:0;width:393px;line-height:31px;color:#999d9d">GIGE_CUST.adl</div>
<svg class="abs" style="left:421px;top:10px" width="80" height="10" viewBox="0 0 80 10" fill="none" stroke="#868a8b" stroke-width="2"><path d="M0.7 7.3L4.5 3.5L8.3 7.3"/><path d="M23 8H32"/><rect x="47" y="1" width="7" height="7"/><path d="M69.7 0.7L77.3 8.3M77.3 0.7L69.7 8.3"/></svg>
<div class="abs" style="left:5px;top:28px;width:500px;height:849px;background:#bbb"></div>
<div class="abs" style="left:5px;top:28px;width:500px;height:20px;background:#4e4ea2"></div>
<span class="m" style="left:224.5px;top:32.4px;color:#fff;">H1:VID-CAM38</span>
<div class="b bd" style="left:413px;top:64px;width:79px;height:29px;"></div>
<div class="abs" style="background:#000;left:433px;top:71px;width:2px;height:12px;"></div>
<div class="abs" style="background:#000;left:433px;top:85px;width:2px;height:2px;"></div>
<span class="m" style="left:444.5px;top:72.4px;">Record</span>
<span class="m" style="left:230px;top:91.4px;">Exposure</span>
<span class="m" style="left:122.5px;top:116.9px;">Off</span>
<span class="m" style="left:297.5px;top:116.9px;">Off</span>
<div class="b bd" style="left:193px;top:112px;width:20px;height:20px;"></div>
<span class="m" style="left:122.5px;top:142.1px;">Once</span>
<span class="m" style="left:297.5px;top:142.1px;">Once</span>
<div class="b bd" style="left:193px;top:137px;width:20px;height:20px;"></div>
<span class="m" style="left:122.5px;top:167.3px;">Continuous</span>
<span class="m" style="left:297.5px;top:167.3px;">Continuous</span>
<div class="b bd" style="left:193px;top:162px;width:20px;height:20px;"></div>
<div class="abs" style="left:218px;top:112px;width:20px;height:20px;background:#5b92fa"></div>
<div class="abs" style="left:368px;top:112px;width:20px;height:20px;background:#1fba00"></div>
<div class="b bd" style="left:243px;top:136px;width:50px;height:22px;"></div>
<span class="m" style="left:258.5px;top:141.4px;">Set</span>
<div class="abs" style="left:81px;top:198px;width:239px;height:23px;box-sizing:border-box;background:#9f9f9f;border:2px solid;border-color:#5e5e5e #ebebeb #ebebeb #5e5e5e"></div>
<div class="b bd" style="left:214px;top:200px;width:30px;height:19px;"></div>
<div class="abs" style="left:228px;top:202px;width:1px;height:15px;background:#5e5e5e"></div>
<div class="abs" style="left:229px;top:202px;width:1px;height:15px;background:#ebebeb"></div>
<div class="b bd" style="left:326px;top:206px;width:50px;height:22px;"></div>
<span class="m" style="left:341.5px;top:211.4px;">Set</span>
<div class="abs" style="left:381px;top:210px;width:50px;height:15px;background:#000"></div>
<span class="m" style="left:390px;top:211.4px;color:#12e012;">63910</span>
<div class="abs" style="left:175px;top:227px;width:50px;height:15px;background:#000"></div>
<span class="m" style="left:184px;top:228.4px;color:#12e012;">63910</span>
<span class="m" style="left:242px;top:253.4px;">Gain</span>
<span class="m" style="left:122.5px;top:278.9px;">Off</span>
<span class="m" style="left:297.5px;top:278.9px;">Off</span>
<div class="b bd" style="left:193px;top:274px;width:20px;height:20px;"></div>
<span class="m" style="left:122.5px;top:304.1px;">Once</span>
<span class="m" style="left:297.5px;top:304.1px;">Once</span>
<div class="b bd" style="left:193px;top:299px;width:20px;height:20px;"></div>
<span class="m" style="left:122.5px;top:329.3px;">Continuous</span>
<span class="m" style="left:297.5px;top:329.3px;">Continuous</span>
<div class="b bd" style="left:193px;top:324px;width:20px;height:20px;"></div>
<div class="abs" style="left:218px;top:274px;width:20px;height:20px;background:#5b92fa"></div>
<div class="abs" style="left:368px;top:274px;width:20px;height:20px;background:#1fba00"></div>
<div class="b bd" style="left:243px;top:298px;width:50px;height:22px;"></div>
<span class="m" style="left:258.5px;top:303.4px;">Set</span>
<div class="abs" style="left:81px;top:360px;width:239px;height:23px;box-sizing:border-box;background:#9f9f9f;border:2px solid;border-color:#5e5e5e #ebebeb #ebebeb #5e5e5e"></div>
<div class="b bd" style="left:221px;top:362px;width:30px;height:19px;"></div>
<div class="abs" style="left:235px;top:364px;width:1px;height:15px;background:#5e5e5e"></div>
<div class="abs" style="left:236px;top:364px;width:1px;height:15px;background:#ebebeb"></div>
<div class="b bd" style="left:326px;top:368px;width:50px;height:22px;"></div>
<span class="m" style="left:341.5px;top:373.4px;">Set</span>
<div class="abs" style="left:381px;top:372px;width:50px;height:15px;background:#000"></div>
<span class="m" style="left:396px;top:373.4px;color:#12e012;">242</span>
<div class="abs" style="left:175px;top:389px;width:50px;height:15px;background:#000"></div>
<span class="m" style="left:190px;top:390.4px;color:#12e012;">242</span>
<span class="m" style="left:230px;top:415.4px;">Centroid</span>
<div class="abs" style="left:122px;top:436px;width:60px;height:15px;background:#000"></div>
<span class="m" style="left:142px;top:437.4px;color:#12e012;">473</span>
<div class="abs" style="left:122px;top:453px;width:60px;height:15px;background:#000"></div>
<span class="m" style="left:142px;top:454.4px;color:#12e012;">242</span>
<svg class="abs" style="left:188px;top:436px" width="200" height="200" viewBox="0 0 200 200"><path d="M0 0H200L198 2H2V198L0 200Z" fill="#ebebeb"/><path d="M200 0V200H0L2 198H198V2Z" fill="#5e5e5e"/><path d="M28.5 10V171.5H200M23 10.5H34M28.5 20.6H32.5M28.5 30.7H32.5M28.5 40.8H32.5M23 50.9H34M28.5 61H32.5M28.5 71H32.5M28.5 81.1H32.5M23 91.2H34M28.5 101.3H32.5M28.5 111.4H32.5M28.5 121.5H32.5M23 131.6H34M28.5 141.7H32.5M28.5 151.8H32.5M28.5 161.8H32.5M23 171.9H34M28.5 166V174M35.3 168.5V173.5M42.1 168.5V173.5M48.9 168.5V173.5M55.7 168.5V173.5M62.5 166V174M69.4 168.5V173.5M76.2 168.5V173.5M83 168.5V173.5M89.8 168.5V173.5M96.6 166V174M103.4 168.5V173.5M110.2 168.5V173.5M117 168.5V173.5M123.8 168.5V173.5M130.6 166V174M137.5 168.5V173.5M144.3 168.5V173.5M151.1 168.5V173.5M157.9 168.5V173.5M164.7 166V174M171.5 168.5V173.5M178.3 168.5V173.5M185.1 168.5V173.5M191.9 168.5V173.5M198.8 166V174" stroke="#000" stroke-width="1" fill="none" shape-rendering="crispEdges"/><g font-family="Liberation Sans, sans-serif" font-weight="bold" font-size="7.6px" fill="#000"><text x="22" y="13.3" text-anchor="end" textLength="18" lengthAdjust="spacingAndGlyphs">247.5</text><text x="22" y="53.7" text-anchor="end" textLength="11" lengthAdjust="spacingAndGlyphs">245</text><text x="22" y="94" text-anchor="end" textLength="18" lengthAdjust="spacingAndGlyphs">242.5</text><text x="22" y="134.4" text-anchor="end" textLength="11" lengthAdjust="spacingAndGlyphs">240</text><text x="22" y="174.8" text-anchor="end" textLength="18" lengthAdjust="spacingAndGlyphs">237.5</text><text x="27.5" y="184" text-anchor="middle" textLength="11" lengthAdjust="spacingAndGlyphs">460</text><text x="61.6" y="184" text-anchor="middle" textLength="11" lengthAdjust="spacingAndGlyphs">465</text><text x="95.6" y="184" text-anchor="middle" textLength="11" lengthAdjust="spacingAndGlyphs">470</text><text x="129.7" y="184" text-anchor="middle" textLength="11" lengthAdjust="spacingAndGlyphs">475</text><text x="163.7" y="184" text-anchor="middle" textLength="11" lengthAdjust="spacingAndGlyphs">480</text><text x="194" y="184" text-anchor="middle" textLength="7" lengthAdjust="spacingAndGlyphs">48</text></g><text x="0" y="193.8" font-family="Liberation Sans, sans-serif" font-size="9.5px" textLength="32" lengthAdjust="spacingAndGlyphs">Centro d</text><rect x="111" y="90" width="2" height="1.5" fill="#000"/></svg>
<span class="m" style="left:176.5px;top:647.9px;">Gaussian Width X</span>
<div class="abs" style="left:278px;top:646px;width:60px;height:15px;background:#000"></div>
<span class="m" style="left:298px;top:647.4px;color:#12e012;">121</span>
<span class="m" style="left:176.5px;top:667.9px;">Gaussian Width Y</span>
<div class="abs" style="left:278px;top:666px;width:60px;height:15px;background:#000"></div>
<span class="m" style="left:298px;top:667.4px;color:#12e012;">327</span>
<span class="m" style="left:182.5px;top:687.9px;">Image Pixel Sum</span>
<div class="abs" style="left:278px;top:686px;width:60px;height:15px;background:#000"></div>
<span class="m" style="left:301px;top:687.4px;color:#12e012;">61</span>
<span class="m" style="left:177.5px;top:715.9px;">Archive Interval (min)</span>
<div class="abs" style="left:315px;top:711px;width:35px;height:20px;box-sizing:border-box;background:#bbb;border:2px solid;border-color:#5e5e5e #ebebeb #ebebeb #5e5e5e"></div>
<span class="m" style="left:316px;top:714.4px;">0</span>
<div class="abs" style="left:317px;top:714px;width:1px;height:12px;background:#333"></div>
<span class="m" style="left:281px;top:759.9px;">Frame Count</span>
<div class="abs" style="left:353px;top:758px;width:60px;height:15px;background:#000"></div>
<span class="m" style="left:367px;top:759.4px;color:#12e012;">42194</span>
<span class="m" style="left:257px;top:779.9px;">Frame Rate (Hz)</span>
<div class="abs" style="left:353px;top:778px;width:60px;height:15px;background:#000"></div>
<span class="m" style="left:364px;top:779.4px;color:#12e012;">15.622</span>
<span class="m" style="left:197px;top:799.9px;">Predicted Frame Rate (Hz)</span>
<div class="abs" style="left:353px;top:798px;width:60px;height:15px;background:#000"></div>
<span class="m" style="left:364px;top:799.4px;color:#12e012;">15.623</span>
<span class="m" style="left:109px;top:824.4px;">Maximum Frame Rate (Hz)</span>
<div class="abs" style="left:253px;top:819px;width:50px;height:20px;box-sizing:border-box;background:#000;border:2px solid;border-color:#555 #7c7c7c #7c7c7c #555"></div>
<div class="abs" style="left:255px;top:822px;width:1px;height:12px;background:#12e012"></div>
<span class="m" style="left:255px;top:822.4px;color:#12e012;">0.000</span>
<div class="b bd" style="left:308px;top:818px;width:50px;height:22px;"></div>
<span class="m" style="left:323.5px;top:823.4px;">Set</span>
<div class="abs" style="left:363px;top:822px;width:50px;height:15px;background:#000"></div>
<span class="m" style="left:366px;top:823.4px;color:#12e012;">100.000</span>
</div>
<div id="w3">
<svg class="abs" style="left:2px;top:5px" width="21" height="19" viewBox="0 0 21 19"><defs><linearGradient id="wg" x1="0" y1="0" x2="0" y2="1"><stop offset="0.25" stop-color="#fff"/><stop offset="1" stop-color="#d6d8d4"/></linearGradient></defs><rect x="0.5" y="0.5" width="19" height="17" rx="1.5" fill="url(#wg)" stroke="#8a8c88"/><rect x="1" y="2" width="18" height="2" fill="#4a78b5"/></svg>
<div class="wt" style="left:25px;top:0;width:384px;line-height:31px;letter-spacing:-.12px;color:#2f383d">GigE Camera - IOT1 JAC</div>
<svg class="abs" style="left:417px;top:10px" width="80" height="10" viewBox="0 0 80 10" fill="none" stroke="#1f2a30" stroke-width="2"><path d="M0.7 7.3L4.5 3.5L8.3 7.3"/><path d="M23 8H32"/><rect x="47" y="1" width="7" height="7"/><path d="M69.7 0.7L77.3 8.3M77.3 0.7L69.7 8.3"/></svg>
<div class="abs" style="left:0;top:28px;width:506px;height:504px;background:#f6f5f4"></div><div class="abs" style="left:0;top:28px;width:501px;height:499px;background:#efefef"></div>
<div class="abs" style="left:0;top:37.5px;width:503px;text-align:center;font:18px/22px 'Liberation Mono',monospace;color:#222">IOT1 JAC</div>
<div class="abs" style="left:10px;top:65px;width:482px;height:361px;background:#000"></div>
<div class="abs vt" style="left:40px;top:85.5px">  (h1cam38 IOT1 JAC)
2026-03-11 16:11:36 PDT</div>
<div class="abs" style="left:266px;top:483px;width:80px;height:1px;background:#e0e0f8"></div>
<div class="abs" style="left:10px;top:489px;width:36px;height:30px;box-sizing:border-box;border:1px solid #a8a8a8;border-radius:3.5px;background:linear-gradient(#fdfdfd,#ebebeb)"></div>
<svg class="abs" style="left:15px;top:492px" width="26" height="24" viewBox="0 0 26 24"><ellipse cx="13" cy="21.3" rx="9" ry="1.4" fill="#000" opacity=".13"/><path d="M12.6 7.5V3.6Q12.6 2.2 14 2.2H17.3Q18.7 2.2 18.7 3.6V7.5" fill="#e2e2e0" stroke="#0c0c0c" stroke-width="1.4"/><path d="M2.7 10Q2.7 8.6 4.2 8.3L11.5 6.7H21.1Q22.6 6.7 22.6 8.4V18.3Q22.6 19.8 21.1 19.8H19L18 21.3H13L12 19.8H4.2Q2.7 19.8 2.7 18.3Z" fill="#565a55" stroke="#080808" stroke-width="1.5" stroke-linejoin="round"/><path d="M3.6 10.2L8.6 9V18.8H3.6Z" fill="#868a84"/><path d="M9 8.6L12 7.6H21.4V9.4H9Z" fill="#8b8f89" opacity=".7"/><circle cx="15.8" cy="15" r="5.5" fill="#2b3437"/><circle cx="16.2" cy="15.9" r="3.6" fill="#040404"/><circle cx="14.9" cy="14.2" r="0.9" fill="#f4f4f4"/><path d="M15.2 14.5L17.6 17" stroke="#cfcfcf" stroke-width="0.9" stroke-linecap="round"/></svg>
</div>
<svg style="position:absolute;left:0;top:0" width="1658" height="1290" viewBox="0 0 1658 1290">
<g fill="none" stroke="#ff40ff" stroke-width="4.8">
<ellipse cx="523.7" cy="111" rx="99.5" ry="31.6"/>
<ellipse cx="679.3" cy="111.2" rx="52.2" ry="32"/>
<path d="M455 137.5L296 403M688 143L734 420"/>
</g>
<path d="M283 423.5L285.8 396.3L306 409.2Z" fill="#ff40ff"/>
<path d="M738 442L722.3 421.6L745.8 416.6Z" fill="#ff40ff"/>
</svg>
</div>
</body></html>
